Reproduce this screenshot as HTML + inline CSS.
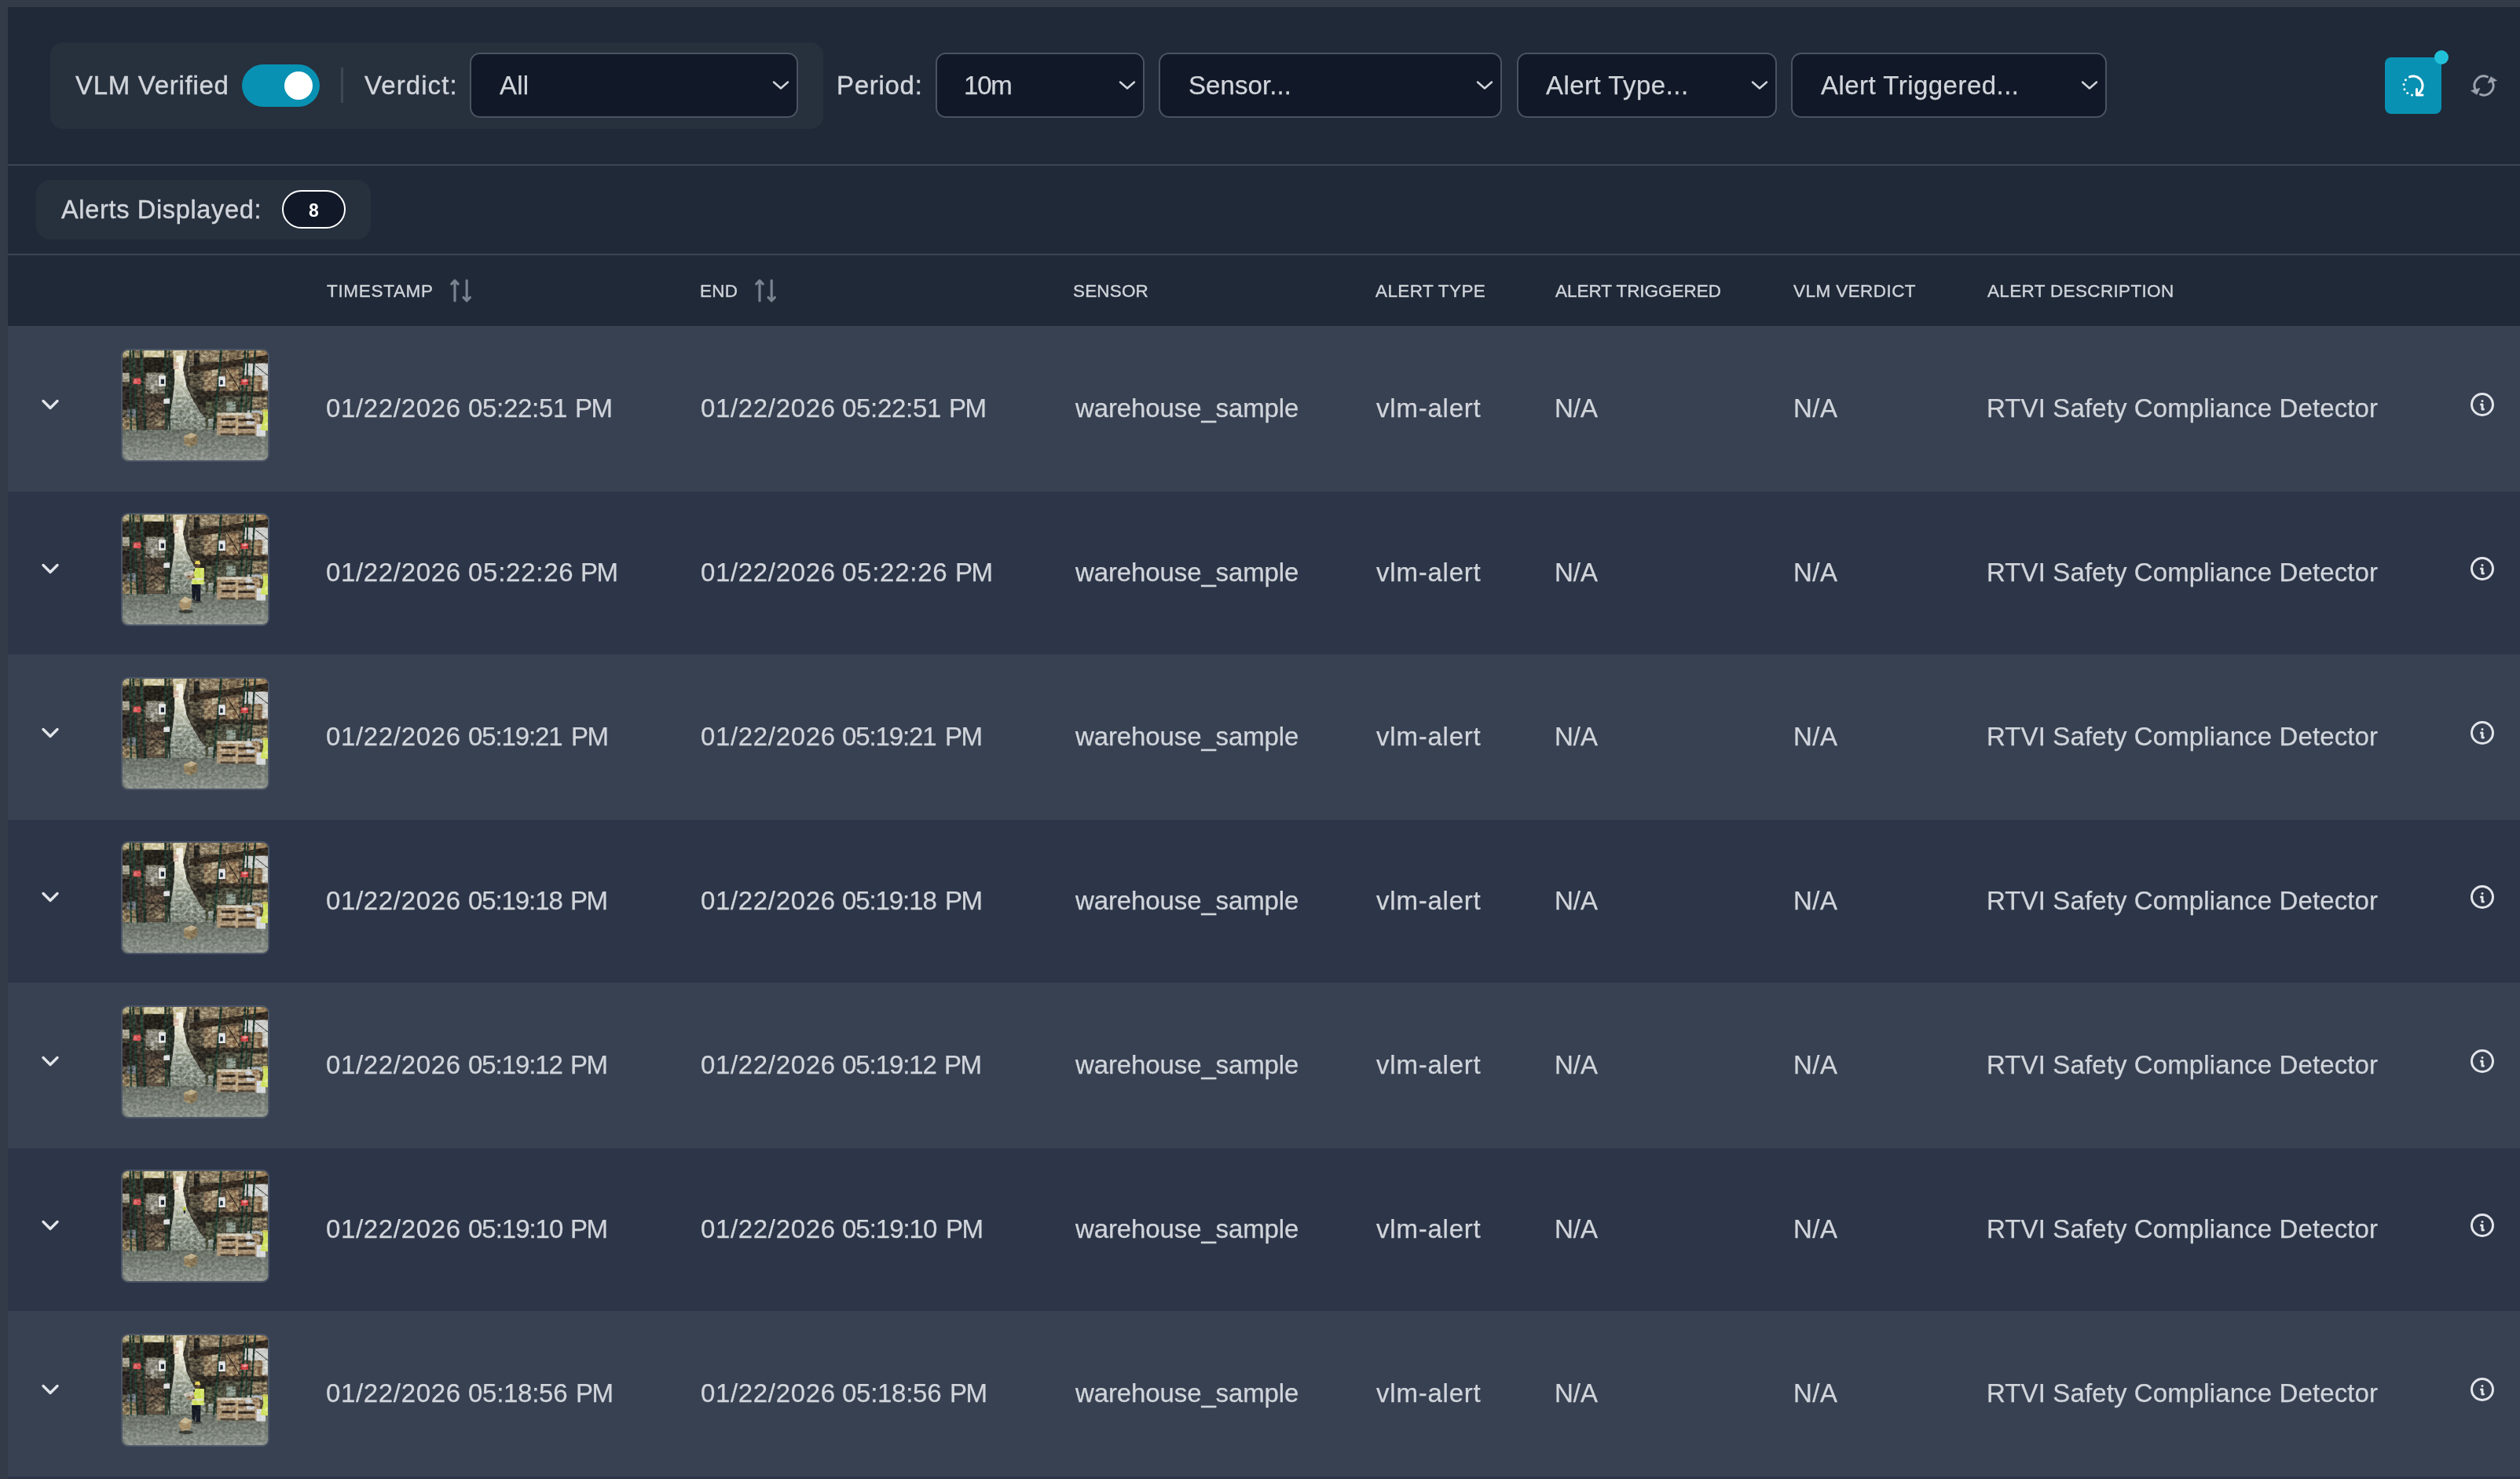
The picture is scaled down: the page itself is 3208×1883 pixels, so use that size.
<!DOCTYPE html>
<html lang="en"><head><meta charset="utf-8"><title>Alerts</title>
<style>
html,body{margin:0;padding:0;background:#333b48;overflow:hidden}
body{width:3208px;height:1883px;position:relative;font-family:"Liberation Sans",sans-serif}
.panel{position:absolute;left:10px;top:9px;width:3198px;height:1874px;background:#202938}
.t{position:absolute;white-space:pre;line-height:1;will-change:transform;font-family:"Liberation Sans",sans-serif}
.grp{position:absolute;background:#27303d;border-radius:16px}
.sel{position:absolute;top:67px;height:83px;box-sizing:border-box;background:#111827;border:2px solid #4a5361;border-radius:13px}
.chev{position:absolute}
.hr{position:absolute;left:10px;width:3198px;height:2px;background:#3a4454}
.row{position:absolute;left:10px;width:3198px;height:209px}
.thumb{position:absolute;left:154px;width:189px;height:144px;box-sizing:border-box;border:2px solid #4b5566;border-radius:9px;overflow:hidden;background:#4b4535}
.thumb svg{display:block}
</style></head><body>
<div class="panel"></div>

<div class="grp" style="left:64px;top:54px;width:984px;height:110px"></div>
<div style="position:absolute;left:308px;top:82px;width:99px;height:54px;border-radius:27px;background:#0891b2"></div>
<div style="position:absolute;left:361.5px;top:90.5px;width:36px;height:36px;border-radius:50%;background:#fff"></div>
<div style="position:absolute;left:433.5px;top:86px;width:3px;height:45px;background:#3e4755"></div>
<div class="sel" style="left:598px;width:418px"></div><svg class="chev" style="left:981px;top:101px" width="26" height="16" viewBox="0 0 26 16"><path d="M4 3.5 L13 11.5 L22 3.5" fill="none" stroke="#d1d5db" stroke-width="2.5" stroke-linecap="round" stroke-linejoin="round"/></svg>
<div class="sel" style="left:1191px;width:265.5px"></div><svg class="chev" style="left:1421.5px;top:101px" width="26" height="16" viewBox="0 0 26 16"><path d="M4 3.5 L13 11.5 L22 3.5" fill="none" stroke="#d1d5db" stroke-width="2.5" stroke-linecap="round" stroke-linejoin="round"/></svg>
<div class="sel" style="left:1475px;width:437px"></div><svg class="chev" style="left:1877px;top:101px" width="26" height="16" viewBox="0 0 26 16"><path d="M4 3.5 L13 11.5 L22 3.5" fill="none" stroke="#d1d5db" stroke-width="2.5" stroke-linecap="round" stroke-linejoin="round"/></svg>
<div class="sel" style="left:1930.5px;width:331.5px"></div><svg class="chev" style="left:2227px;top:101px" width="26" height="16" viewBox="0 0 26 16"><path d="M4 3.5 L13 11.5 L22 3.5" fill="none" stroke="#d1d5db" stroke-width="2.5" stroke-linecap="round" stroke-linejoin="round"/></svg>
<div class="sel" style="left:2280px;width:402px"></div><svg class="chev" style="left:2647px;top:101px" width="26" height="16" viewBox="0 0 26 16"><path d="M4 3.5 L13 11.5 L22 3.5" fill="none" stroke="#d1d5db" stroke-width="2.5" stroke-linecap="round" stroke-linejoin="round"/></svg>
<div style="position:absolute;left:3036px;top:73px;width:72px;height:72px;border-radius:8px;background:#0891b2"></div>
<svg style="position:absolute;left:3054px;top:91px" width="36" height="36" viewBox="0 0 24 24" fill="none" stroke="#fff" stroke-width="2" stroke-linecap="round" stroke-linejoin="round"><path d="M9 4.55a8 8 0 0 1 6 14.9m0 -4.45v5h5"/><path d="M5.63 7.16l0 .01"/><path d="M4.06 11l0 .01"/><path d="M4.63 15.1l0 .01"/><path d="M7.16 18.37l0 .01"/><path d="M11 19.94l0 .01"/></svg>
<div style="position:absolute;left:3099px;top:64px;width:18px;height:18px;border-radius:50%;background:#22c1da"></div>
<svg style="position:absolute;left:3142.1px;top:88.85px" width="40" height="40" viewBox="-20 -20 40 40" fill="none" stroke="#9ca3af" stroke-width="2.9" stroke-linecap="round"><path d="M4.5 -11.13 A12 12 0 0 0 -10.9 5.01"/><path d="M-4.5 11.13 A12 12 0 0 0 10.9 -5.01"/><path d="M-16.06 6.42 L-5.24 3.38 L-8.79 10.99 Z M16.06 -6.42 L5.24 -3.38 L8.79 -10.99 Z" fill="#9ca3af" stroke="#9ca3af" stroke-width="0.8" stroke-linejoin="round"/></svg>
<div class="hr" style="top:209px"></div>
<div class="hr" style="top:323px"></div>
<div class="grp" style="left:46px;top:229px;width:426px;height:76px;border-radius:18px"></div>
<div style="position:absolute;left:359px;top:242px;width:81px;height:49px;box-sizing:border-box;border:2px solid #fff;border-radius:25px;background:#111827"></div>
<svg style="position:absolute;left:571.4px;top:350px" width="40" height="40" viewBox="0 0 40 40" fill="none" stroke="#79828f" stroke-width="3.2" stroke-linecap="round" stroke-linejoin="round"><path d="M8 33 V7.2 M3.8 11.6 L8 7.2 L12.2 11.6"/><path d="M23.2 7.2 V33 M19 28.6 L23.2 33 L27.4 28.6"/></svg>
<svg style="position:absolute;left:958.8px;top:350px" width="40" height="40" viewBox="0 0 40 40" fill="none" stroke="#79828f" stroke-width="3.2" stroke-linecap="round" stroke-linejoin="round"><path d="M8 33 V7.2 M3.8 11.6 L8 7.2 L12.2 11.6"/><path d="M23.2 7.2 V33 M19 28.6 L23.2 33 L27.4 28.6"/></svg>
<div class="row" style="top:415px;height:211px;background:#374152"></div>
<svg style="position:absolute;left:48px;top:502px" width="32" height="26" viewBox="0 0 32 26"><path d="M7 8.5 L16 17.5 L25 8.5" fill="none" stroke="#e2e5ea" stroke-width="3.4" stroke-linecap="round" stroke-linejoin="round"/></svg>
<div class="thumb" style="top:444px"><svg width="185" height="140" viewBox="0 0 185.3 140.2" preserveAspectRatio="none"><defs><linearGradient id="flr0" x1="0" y1="0" x2="0" y2="1"><stop offset="0" stop-color="#6b7468"/><stop offset="1" stop-color="#929990"/></linearGradient><linearGradient id="air0" x1="0" y1="0" x2="0" y2="1"><stop offset="0" stop-color="#f1ecd6"/><stop offset="0.25" stop-color="#c9cbb6"/><stop offset="0.6" stop-color="#9aa395"/><stop offset="1" stop-color="#848d80"/></linearGradient><filter id="blr0" x="-5%" y="-5%" width="110%" height="110%"><feGaussianBlur stdDeviation="0.6"/><feColorMatrix type="saturate" values="0.78"/></filter><filter id="nzr0" x="0" y="0" width="100%" height="100%" color-interpolation-filters="sRGB"><feTurbulence type="fractalNoise" baseFrequency="0.22 0.3" numOctaves="3" seed="7"/><feColorMatrix type="saturate" values="0"/><feComponentTransfer><feFuncR type="linear" slope="2.4" intercept="-0.78"/><feFuncG type="linear" slope="2.4" intercept="-0.78"/><feFuncB type="linear" slope="2.4" intercept="-0.78"/><feFuncA type="linear" slope="0" intercept="1"/></feComponentTransfer></filter></defs><g filter="url(#blr0)"><rect x="-3" y="-3" width="191" height="146" fill="#4b4535"/><rect x="-3" y="100.57" width="191" height="43.23" fill="url(#flr0)"/><rect x="63.45" y="-2.3" width="21.84" height="27.59" fill="#cfc49a"/><rect x="68.62" y="6.9" width="8.62" height="17.24" fill="#f3efe2"/><rect x="64.6" y="14.94" width="6.9" height="9.2" fill="#d9b9a0"/><polygon points="65.17,24.14 77.24,24.14 81.84,45.98 91.03,65.52 100.23,80.46 120.92,101.15 57.13,101.15 60.57,80.46 64.02,59.77 66.32,37.93" fill="url(#air0)"/><rect x="-4.37" y="-2.3" width="68.97" height="12.07" fill="#8d7f52"/><rect x="27.24" y="0.57" width="25.86" height="8.05" fill="#d6cc9c"/><rect x="0.0" y="0.57" width="8.85" height="7.47" fill="#b9ad80"/><rect x="27.82" y="9.2" width="36.78" height="18.97" fill="#2a261f"/><rect x="-4.37" y="9.77" width="32.18" height="24.71" fill="#3a352a"/><rect x="0.0" y="28.74" width="8.85" height="11.49" fill="#a9a48e"/><rect x="29.54" y="28.74" width="26.44" height="26.44" fill="#86826f"/><rect x="32.41" y="32.18" width="11.49" height="18.39" fill="#9a968a"/><rect x="-4.37" y="45.98" width="22.99" height="29.89" fill="#332c25"/><rect x="18.62" y="56.32" width="39.08" height="44.83" fill="#4a3e30"/><rect x="31.26" y="66.67" width="21.84" height="8.05" fill="#6b5640"/><rect x="30.69" y="78.16" width="25.29" height="21.84" fill="#6c5b45"/><rect x="-4.37" y="75.86" width="22.99" height="25.29" fill="#5d5443"/><rect x="5.98" y="74.71" width="11.49" height="10.34" fill="#6f7480"/><rect x="0.0" y="85.06" width="18.62" height="11.49" fill="#86734f"/><rect x="0.0" y="95.98" width="19.77" height="5.17" fill="#9c8a60"/><rect x="41.61" y="87.36" width="11.49" height="9.2" fill="#8b7a5a"/><polygon points="57.7,24.14 66.32,24.14 66.32,37.93 64.02,59.77 60.57,80.46 57.7,100.0" fill="#2c2f27"/><line x1="9.66" y1="-2.3" x2="10.8" y2="101.72" stroke="#1f4133" stroke-width="2.3"/><line x1="13.45" y1="-2.3" x2="19.2" y2="101.72" stroke="#1f4133" stroke-width="2.53"/><line x1="23.22" y1="-2.3" x2="28.74" y2="101.72" stroke="#1f4133" stroke-width="2.99"/><line x1="54.48" y1="-2.3" x2="55.63" y2="101.72" stroke="#1f4133" stroke-width="2.3"/><line x1="59.43" y1="-2.3" x2="60.23" y2="101.72" stroke="#1f4133" stroke-width="1.61"/><line x1="30.11" y1="50.57" x2="57.7" y2="73.56" stroke="#3a3328" stroke-width="1.38"/><line x1="30.11" y1="89.66" x2="55.4" y2="71.26" stroke="#3a3328" stroke-width="1.15"/><rect x="13.79" y="35.63" width="9.66" height="7.47" fill="#e63a3e" rx="1"/><rect x="15.17" y="36.78" width="6.9" height="2.87" fill="#ef8a86"/><rect x="46.21" y="32.18" width="8.74" height="13.56" fill="#e9e9e6"/><rect x="48.85" y="36.78" width="4.25" height="5.98" fill="#27364f"/><rect x="52.41" y="61.49" width="7.82" height="6.55" fill="#dfe0e2"/><polygon points="77.24,24.14 82.99,-2.3 123.79,-2.3 123.79,101.15 100.23,80.46 91.03,65.52 81.84,45.98" fill="#4d4738"/><rect x="99.08" y="14.94" width="4.6" height="35.63" fill="#6f6650"/><rect x="84.14" y="14.94" width="6.32" height="17.24" fill="#7d735c"/><rect x="107.13" y="57.47" width="6.9" height="9.2" fill="#7a8078"/><rect x="85.29" y="-2.3" width="13.79" height="16.09" fill="#8c7a58"/><rect x="99.08" y="-2.3" width="24.71" height="17.24" fill="#9b8a68"/><rect x="91.03" y="3.45" width="6.9" height="31.03" fill="#2d2a25"/><rect x="103.68" y="19.54" width="18.39" height="32.18" fill="#97805a"/><rect x="114.02" y="19.54" width="7.47" height="12.64" fill="#b9aa88"/><rect x="85.29" y="29.89" width="13.79" height="16.09" fill="#5d543f"/><polygon points="94.48,50.57 123.79,55.17 123.79,66.67 105.98,73.56 94.48,66.67" fill="#2e2922"/><rect x="105.98" y="64.37" width="17.82" height="34.48" fill="#55583f"/><rect x="109.43" y="87.36" width="6.9" height="9.2" fill="#9aa39a"/><rect x="123.79" y="-2.3" width="62.64" height="103.45" fill="#6a5940"/><rect x="123.79" y="-2.3" width="62.64" height="17.24" fill="#8a744f"/><rect x="154.25" y="0.0" width="32.18" height="9.2" fill="#a88a58"/><polygon points="85.29,20.69 186.44,5.75 186.44,14.94 85.29,28.74" fill="#3b2f24"/><rect x="132.41" y="24.14" width="15.52" height="27.01" fill="#a3875c"/><rect x="133.56" y="34.48" width="13.79" height="5.75" fill="#8a6c48"/><rect x="163.45" y="32.18" width="16.09" height="25.29" fill="#9c835c"/><rect x="155.4" y="16.67" width="31.03" height="15.52" fill="#cfd0cd"/><rect x="178.39" y="32.18" width="8.05" height="18.39" fill="#d0cfc6"/><rect x="99.08" y="52.3" width="87.36" height="5.75" fill="#3b3026"/><rect x="123.79" y="58.05" width="62.64" height="22.41" fill="#53543f"/><rect x="132.41" y="65.52" width="11.49" height="12.64" fill="#8a9a8c"/><rect x="163.45" y="59.77" width="20.69" height="13.79" fill="#8c7a58"/><rect x="158.85" y="76.44" width="19.54" height="5.75" fill="#aeb8bc"/><line x1="126.09" y1="-2.3" x2="116.32" y2="101.15" stroke="#1f4133" stroke-width="2.76"/><line x1="156.55" y1="-2.3" x2="149.08" y2="101.15" stroke="#1f4133" stroke-width="2.53"/><line x1="160.0" y1="-2.3" x2="156.55" y2="101.15" stroke="#1f4133" stroke-width="1.84"/><line x1="169.2" y1="-2.3" x2="161.72" y2="101.15" stroke="#1f4133" stroke-width="2.3"/><line x1="127.82" y1="14.94" x2="149.66" y2="50.57" stroke="#3a3328" stroke-width="1.15"/><line x1="168.05" y1="18.39" x2="185.29" y2="32.18" stroke="#3a4038" stroke-width="0.92"/><rect x="150.8" y="36.78" width="9.43" height="7.13" fill="#e63a3e"/><rect x="152.18" y="37.7" width="6.67" height="2.53" fill="#ee8e8a"/><rect x="122.53" y="33.33" width="8.51" height="12.87" fill="#e6e8ea"/><rect x="124.6" y="37.93" width="3.22" height="5.75" fill="#27364f"/><rect x="120.34" y="79.89" width="54.6" height="28.39" fill="#b0966f"/><rect x="121.49" y="79.54" width="43.1" height="3.45" fill="#d3cab4"/><rect x="156.55" y="82.18" width="9.2" height="4.6" fill="#c3c8cc"/><rect x="158.28" y="89.08" width="9.77" height="5.75" fill="#cfd3d6"/><rect x="126.67" y="86.44" width="17.47" height="2.87" fill="#3e3226"/><rect x="147.36" y="87.59" width="21.26" height="2.76" fill="#3e3226"/><rect x="126.67" y="96.32" width="17.47" height="2.99" fill="#3e3226"/><rect x="147.36" y="97.01" width="21.26" height="2.99" fill="#3e3226"/><rect x="124.94" y="105.75" width="44.25" height="2.76" fill="#5a4a36"/><rect x="143.91" y="82.99" width="3.45" height="25.29" fill="#c4aa80"/><rect x="170.92" y="94.25" width="11.49" height="15.52" fill="#d9dbde"/><polygon points="178.97,75.29 186.44,75.29 186.44,102.87 175.86,101.15 179.54,87.36" fill="#d2e600"/><rect x="177.24" y="75.86" width="9.2" height="2.3" fill="#d9c74a"/><polygon points="78.16,109.77 87.59,105.17 95.4,108.28 95.17,118.39 86.44,123.56 78.62,119.54" fill="#9c8555"/><polygon points="78.16,109.77 87.59,105.17 95.4,108.28 86.44,112.64" fill="#c2ae80"/><polygon points="86.44,112.64 95.4,108.28 95.17,118.39 86.44,123.56" fill="#8a744a"/></g><linearGradient id="mgr0" x1="0" y1="0" x2="0" y2="1"><stop offset="0.66" stop-color="#fff"/><stop offset="0.76" stop-color="#666"/></linearGradient><mask id="mkr0"><rect x="0" y="0" width="185.3" height="140.2" fill="url(#mgr0)"/></mask><g mask="url(#mkr0)" style="mix-blend-mode:overlay"><rect x="0" y="0" width="185.3" height="140.2" filter="url(#nzr0)" opacity="0.45"/></g></svg></div>
<svg style="position:absolute;left:3142px;top:497px" width="36" height="36" viewBox="0 0 24 24" fill="none" stroke="#e2e5ea" stroke-width="2" stroke-linecap="round" stroke-linejoin="round"><path d="M3 12a9 9 0 1 0 18 0a9 9 0 0 0 -18 0"/><path d="M12 9h.01"/><path d="M11 12h1v4h1"/></svg>
<div class="row" style="top:626px;height:207px;background:#2d3648"></div>
<svg style="position:absolute;left:48px;top:711px" width="32" height="26" viewBox="0 0 32 26"><path d="M7 8.5 L16 17.5 L25 8.5" fill="none" stroke="#e2e5ea" stroke-width="3.4" stroke-linecap="round" stroke-linejoin="round"/></svg>
<div class="thumb" style="top:653px"><svg width="185" height="140" viewBox="0 0 185.3 140.2" preserveAspectRatio="none"><defs><linearGradient id="flr1" x1="0" y1="0" x2="0" y2="1"><stop offset="0" stop-color="#6b7468"/><stop offset="1" stop-color="#929990"/></linearGradient><linearGradient id="air1" x1="0" y1="0" x2="0" y2="1"><stop offset="0" stop-color="#f1ecd6"/><stop offset="0.25" stop-color="#c9cbb6"/><stop offset="0.6" stop-color="#9aa395"/><stop offset="1" stop-color="#848d80"/></linearGradient><filter id="blr1" x="-5%" y="-5%" width="110%" height="110%"><feGaussianBlur stdDeviation="0.6"/><feColorMatrix type="saturate" values="0.78"/></filter><filter id="nzr1" x="0" y="0" width="100%" height="100%" color-interpolation-filters="sRGB"><feTurbulence type="fractalNoise" baseFrequency="0.22 0.3" numOctaves="3" seed="7"/><feColorMatrix type="saturate" values="0"/><feComponentTransfer><feFuncR type="linear" slope="2.4" intercept="-0.78"/><feFuncG type="linear" slope="2.4" intercept="-0.78"/><feFuncB type="linear" slope="2.4" intercept="-0.78"/><feFuncA type="linear" slope="0" intercept="1"/></feComponentTransfer></filter></defs><g filter="url(#blr1)"><rect x="-3" y="-3" width="191" height="146" fill="#4b4535"/><rect x="-3" y="100.57" width="191" height="43.23" fill="url(#flr1)"/><rect x="63.45" y="-2.3" width="21.84" height="27.59" fill="#cfc49a"/><rect x="68.62" y="6.9" width="8.62" height="17.24" fill="#f3efe2"/><rect x="64.6" y="14.94" width="6.9" height="9.2" fill="#d9b9a0"/><polygon points="65.17,24.14 77.24,24.14 81.84,45.98 91.03,65.52 100.23,80.46 120.92,101.15 57.13,101.15 60.57,80.46 64.02,59.77 66.32,37.93" fill="url(#air1)"/><rect x="-4.37" y="-2.3" width="68.97" height="12.07" fill="#8d7f52"/><rect x="27.24" y="0.57" width="25.86" height="8.05" fill="#d6cc9c"/><rect x="0.0" y="0.57" width="8.85" height="7.47" fill="#b9ad80"/><rect x="27.82" y="9.2" width="36.78" height="18.97" fill="#2a261f"/><rect x="-4.37" y="9.77" width="32.18" height="24.71" fill="#3a352a"/><rect x="0.0" y="28.74" width="8.85" height="11.49" fill="#a9a48e"/><rect x="29.54" y="28.74" width="26.44" height="26.44" fill="#86826f"/><rect x="32.41" y="32.18" width="11.49" height="18.39" fill="#9a968a"/><rect x="-4.37" y="45.98" width="22.99" height="29.89" fill="#332c25"/><rect x="18.62" y="56.32" width="39.08" height="44.83" fill="#4a3e30"/><rect x="31.26" y="66.67" width="21.84" height="8.05" fill="#6b5640"/><rect x="30.69" y="78.16" width="25.29" height="21.84" fill="#6c5b45"/><rect x="-4.37" y="75.86" width="22.99" height="25.29" fill="#5d5443"/><rect x="5.98" y="74.71" width="11.49" height="10.34" fill="#6f7480"/><rect x="0.0" y="85.06" width="18.62" height="11.49" fill="#86734f"/><rect x="0.0" y="95.98" width="19.77" height="5.17" fill="#9c8a60"/><rect x="41.61" y="87.36" width="11.49" height="9.2" fill="#8b7a5a"/><polygon points="57.7,24.14 66.32,24.14 66.32,37.93 64.02,59.77 60.57,80.46 57.7,100.0" fill="#2c2f27"/><line x1="9.66" y1="-2.3" x2="10.8" y2="101.72" stroke="#1f4133" stroke-width="2.3"/><line x1="13.45" y1="-2.3" x2="19.2" y2="101.72" stroke="#1f4133" stroke-width="2.53"/><line x1="23.22" y1="-2.3" x2="28.74" y2="101.72" stroke="#1f4133" stroke-width="2.99"/><line x1="54.48" y1="-2.3" x2="55.63" y2="101.72" stroke="#1f4133" stroke-width="2.3"/><line x1="59.43" y1="-2.3" x2="60.23" y2="101.72" stroke="#1f4133" stroke-width="1.61"/><line x1="30.11" y1="50.57" x2="57.7" y2="73.56" stroke="#3a3328" stroke-width="1.38"/><line x1="30.11" y1="89.66" x2="55.4" y2="71.26" stroke="#3a3328" stroke-width="1.15"/><rect x="13.79" y="35.63" width="9.66" height="7.47" fill="#e63a3e" rx="1"/><rect x="15.17" y="36.78" width="6.9" height="2.87" fill="#ef8a86"/><rect x="46.21" y="32.18" width="8.74" height="13.56" fill="#e9e9e6"/><rect x="48.85" y="36.78" width="4.25" height="5.98" fill="#27364f"/><rect x="52.41" y="61.49" width="7.82" height="6.55" fill="#dfe0e2"/><polygon points="77.24,24.14 82.99,-2.3 123.79,-2.3 123.79,101.15 100.23,80.46 91.03,65.52 81.84,45.98" fill="#4d4738"/><rect x="99.08" y="14.94" width="4.6" height="35.63" fill="#6f6650"/><rect x="84.14" y="14.94" width="6.32" height="17.24" fill="#7d735c"/><rect x="107.13" y="57.47" width="6.9" height="9.2" fill="#7a8078"/><rect x="85.29" y="-2.3" width="13.79" height="16.09" fill="#8c7a58"/><rect x="99.08" y="-2.3" width="24.71" height="17.24" fill="#9b8a68"/><rect x="91.03" y="3.45" width="6.9" height="31.03" fill="#2d2a25"/><rect x="103.68" y="19.54" width="18.39" height="32.18" fill="#97805a"/><rect x="114.02" y="19.54" width="7.47" height="12.64" fill="#b9aa88"/><rect x="85.29" y="29.89" width="13.79" height="16.09" fill="#5d543f"/><polygon points="94.48,50.57 123.79,55.17 123.79,66.67 105.98,73.56 94.48,66.67" fill="#2e2922"/><rect x="105.98" y="64.37" width="17.82" height="34.48" fill="#55583f"/><rect x="109.43" y="87.36" width="6.9" height="9.2" fill="#9aa39a"/><rect x="123.79" y="-2.3" width="62.64" height="103.45" fill="#6a5940"/><rect x="123.79" y="-2.3" width="62.64" height="17.24" fill="#8a744f"/><rect x="154.25" y="0.0" width="32.18" height="9.2" fill="#a88a58"/><polygon points="85.29,20.69 186.44,5.75 186.44,14.94 85.29,28.74" fill="#3b2f24"/><rect x="132.41" y="24.14" width="15.52" height="27.01" fill="#a3875c"/><rect x="133.56" y="34.48" width="13.79" height="5.75" fill="#8a6c48"/><rect x="163.45" y="32.18" width="16.09" height="25.29" fill="#9c835c"/><rect x="155.4" y="16.67" width="31.03" height="15.52" fill="#cfd0cd"/><rect x="178.39" y="32.18" width="8.05" height="18.39" fill="#d0cfc6"/><rect x="99.08" y="52.3" width="87.36" height="5.75" fill="#3b3026"/><rect x="123.79" y="58.05" width="62.64" height="22.41" fill="#53543f"/><rect x="132.41" y="65.52" width="11.49" height="12.64" fill="#8a9a8c"/><rect x="163.45" y="59.77" width="20.69" height="13.79" fill="#8c7a58"/><rect x="158.85" y="76.44" width="19.54" height="5.75" fill="#aeb8bc"/><line x1="126.09" y1="-2.3" x2="116.32" y2="101.15" stroke="#1f4133" stroke-width="2.76"/><line x1="156.55" y1="-2.3" x2="149.08" y2="101.15" stroke="#1f4133" stroke-width="2.53"/><line x1="160.0" y1="-2.3" x2="156.55" y2="101.15" stroke="#1f4133" stroke-width="1.84"/><line x1="169.2" y1="-2.3" x2="161.72" y2="101.15" stroke="#1f4133" stroke-width="2.3"/><line x1="127.82" y1="14.94" x2="149.66" y2="50.57" stroke="#3a3328" stroke-width="1.15"/><line x1="168.05" y1="18.39" x2="185.29" y2="32.18" stroke="#3a4038" stroke-width="0.92"/><rect x="150.8" y="36.78" width="9.43" height="7.13" fill="#e63a3e"/><rect x="152.18" y="37.7" width="6.67" height="2.53" fill="#ee8e8a"/><rect x="122.53" y="33.33" width="8.51" height="12.87" fill="#e6e8ea"/><rect x="124.6" y="37.93" width="3.22" height="5.75" fill="#27364f"/><rect x="120.34" y="79.89" width="54.6" height="28.39" fill="#b0966f"/><rect x="121.49" y="79.54" width="43.1" height="3.45" fill="#d3cab4"/><rect x="156.55" y="82.18" width="9.2" height="4.6" fill="#c3c8cc"/><rect x="158.28" y="89.08" width="9.77" height="5.75" fill="#cfd3d6"/><rect x="126.67" y="86.44" width="17.47" height="2.87" fill="#3e3226"/><rect x="147.36" y="87.59" width="21.26" height="2.76" fill="#3e3226"/><rect x="126.67" y="96.32" width="17.47" height="2.99" fill="#3e3226"/><rect x="147.36" y="97.01" width="21.26" height="2.99" fill="#3e3226"/><rect x="124.94" y="105.75" width="44.25" height="2.76" fill="#5a4a36"/><rect x="143.91" y="82.99" width="3.45" height="25.29" fill="#c4aa80"/><rect x="170.92" y="94.25" width="11.49" height="15.52" fill="#d9dbde"/><polygon points="178.97,75.29 186.44,75.29 186.44,102.87 175.86,101.15 179.54,87.36" fill="#d2e600"/><rect x="177.24" y="75.86" width="9.2" height="2.3" fill="#d9c74a"/><g transform="translate(0,-1.1)"><ellipse cx="80.69" cy="124.71" rx="9.2" ry="2.53" fill="#3d4038"/><ellipse cx="94.48" cy="112.07" rx="6.9" ry="2.3" fill="#4a4d44"/><polygon points="88.16,90.23 99.66,90.23 99.08,111.49 93.91,112.07 93.33,98.85 92.18,110.92 88.74,108.05" fill="#161b2b"/><rect x="90.46" y="70.69" width="4.6" height="7.47" fill="#1c1e24"/><polygon points="93.33,68.39 104.25,69.54 103.68,90.23 88.16,89.66 89.31,78.16" fill="#d4e800"/><rect x="89.31" y="82.18" width="14.37" height="2.3" fill="#dfe0c8"/><polygon points="81.84,80.46 91.03,77.01 92.18,81.61 82.99,83.91" fill="#a07850"/><polygon points="77.82,75.29 90.46,72.18 91.61,77.01 79.54,79.89" fill="#cfc8ba"/><rect x="92.76" y="63.79" width="5.75" height="5.17" fill="#5a4030"/><polygon points="91.61,64.37 93.33,60.34 97.93,59.77 99.66,64.37" fill="#f0d800"/><polygon points="72.64,111.49 79.54,105.75 88.16,109.77 86.44,120.69 76.09,123.56 72.07,118.39" fill="#b09665"/><polygon points="72.64,111.49 79.54,105.75 88.16,109.77 81.84,113.79" fill="#cdb98a"/></g></g><linearGradient id="mgr1" x1="0" y1="0" x2="0" y2="1"><stop offset="0.66" stop-color="#fff"/><stop offset="0.76" stop-color="#666"/></linearGradient><mask id="mkr1"><rect x="0" y="0" width="185.3" height="140.2" fill="url(#mgr1)"/></mask><g mask="url(#mkr1)" style="mix-blend-mode:overlay"><rect x="0" y="0" width="185.3" height="140.2" filter="url(#nzr1)" opacity="0.45"/></g></svg></div>
<svg style="position:absolute;left:3142px;top:706px" width="36" height="36" viewBox="0 0 24 24" fill="none" stroke="#e2e5ea" stroke-width="2" stroke-linecap="round" stroke-linejoin="round"><path d="M3 12a9 9 0 1 0 18 0a9 9 0 0 0 -18 0"/><path d="M12 9h.01"/><path d="M11 12h1v4h1"/></svg>
<div class="row" style="top:833px;height:211px;background:#374152"></div>
<svg style="position:absolute;left:48px;top:920px" width="32" height="26" viewBox="0 0 32 26"><path d="M7 8.5 L16 17.5 L25 8.5" fill="none" stroke="#e2e5ea" stroke-width="3.4" stroke-linecap="round" stroke-linejoin="round"/></svg>
<div class="thumb" style="top:862px"><svg width="185" height="140" viewBox="0 0 185.3 140.2" preserveAspectRatio="none"><defs><linearGradient id="flr2" x1="0" y1="0" x2="0" y2="1"><stop offset="0" stop-color="#6b7468"/><stop offset="1" stop-color="#929990"/></linearGradient><linearGradient id="air2" x1="0" y1="0" x2="0" y2="1"><stop offset="0" stop-color="#f1ecd6"/><stop offset="0.25" stop-color="#c9cbb6"/><stop offset="0.6" stop-color="#9aa395"/><stop offset="1" stop-color="#848d80"/></linearGradient><filter id="blr2" x="-5%" y="-5%" width="110%" height="110%"><feGaussianBlur stdDeviation="0.6"/><feColorMatrix type="saturate" values="0.78"/></filter><filter id="nzr2" x="0" y="0" width="100%" height="100%" color-interpolation-filters="sRGB"><feTurbulence type="fractalNoise" baseFrequency="0.22 0.3" numOctaves="3" seed="7"/><feColorMatrix type="saturate" values="0"/><feComponentTransfer><feFuncR type="linear" slope="2.4" intercept="-0.78"/><feFuncG type="linear" slope="2.4" intercept="-0.78"/><feFuncB type="linear" slope="2.4" intercept="-0.78"/><feFuncA type="linear" slope="0" intercept="1"/></feComponentTransfer></filter></defs><g filter="url(#blr2)"><rect x="-3" y="-3" width="191" height="146" fill="#4b4535"/><rect x="-3" y="100.57" width="191" height="43.23" fill="url(#flr2)"/><rect x="63.45" y="-2.3" width="21.84" height="27.59" fill="#cfc49a"/><rect x="68.62" y="6.9" width="8.62" height="17.24" fill="#f3efe2"/><rect x="64.6" y="14.94" width="6.9" height="9.2" fill="#d9b9a0"/><polygon points="65.17,24.14 77.24,24.14 81.84,45.98 91.03,65.52 100.23,80.46 120.92,101.15 57.13,101.15 60.57,80.46 64.02,59.77 66.32,37.93" fill="url(#air2)"/><rect x="-4.37" y="-2.3" width="68.97" height="12.07" fill="#8d7f52"/><rect x="27.24" y="0.57" width="25.86" height="8.05" fill="#d6cc9c"/><rect x="0.0" y="0.57" width="8.85" height="7.47" fill="#b9ad80"/><rect x="27.82" y="9.2" width="36.78" height="18.97" fill="#2a261f"/><rect x="-4.37" y="9.77" width="32.18" height="24.71" fill="#3a352a"/><rect x="0.0" y="28.74" width="8.85" height="11.49" fill="#a9a48e"/><rect x="29.54" y="28.74" width="26.44" height="26.44" fill="#86826f"/><rect x="32.41" y="32.18" width="11.49" height="18.39" fill="#9a968a"/><rect x="-4.37" y="45.98" width="22.99" height="29.89" fill="#332c25"/><rect x="18.62" y="56.32" width="39.08" height="44.83" fill="#4a3e30"/><rect x="31.26" y="66.67" width="21.84" height="8.05" fill="#6b5640"/><rect x="30.69" y="78.16" width="25.29" height="21.84" fill="#6c5b45"/><rect x="-4.37" y="75.86" width="22.99" height="25.29" fill="#5d5443"/><rect x="5.98" y="74.71" width="11.49" height="10.34" fill="#6f7480"/><rect x="0.0" y="85.06" width="18.62" height="11.49" fill="#86734f"/><rect x="0.0" y="95.98" width="19.77" height="5.17" fill="#9c8a60"/><rect x="41.61" y="87.36" width="11.49" height="9.2" fill="#8b7a5a"/><polygon points="57.7,24.14 66.32,24.14 66.32,37.93 64.02,59.77 60.57,80.46 57.7,100.0" fill="#2c2f27"/><line x1="9.66" y1="-2.3" x2="10.8" y2="101.72" stroke="#1f4133" stroke-width="2.3"/><line x1="13.45" y1="-2.3" x2="19.2" y2="101.72" stroke="#1f4133" stroke-width="2.53"/><line x1="23.22" y1="-2.3" x2="28.74" y2="101.72" stroke="#1f4133" stroke-width="2.99"/><line x1="54.48" y1="-2.3" x2="55.63" y2="101.72" stroke="#1f4133" stroke-width="2.3"/><line x1="59.43" y1="-2.3" x2="60.23" y2="101.72" stroke="#1f4133" stroke-width="1.61"/><line x1="30.11" y1="50.57" x2="57.7" y2="73.56" stroke="#3a3328" stroke-width="1.38"/><line x1="30.11" y1="89.66" x2="55.4" y2="71.26" stroke="#3a3328" stroke-width="1.15"/><rect x="13.79" y="35.63" width="9.66" height="7.47" fill="#e63a3e" rx="1"/><rect x="15.17" y="36.78" width="6.9" height="2.87" fill="#ef8a86"/><rect x="46.21" y="32.18" width="8.74" height="13.56" fill="#e9e9e6"/><rect x="48.85" y="36.78" width="4.25" height="5.98" fill="#27364f"/><rect x="52.41" y="61.49" width="7.82" height="6.55" fill="#dfe0e2"/><polygon points="77.24,24.14 82.99,-2.3 123.79,-2.3 123.79,101.15 100.23,80.46 91.03,65.52 81.84,45.98" fill="#4d4738"/><rect x="99.08" y="14.94" width="4.6" height="35.63" fill="#6f6650"/><rect x="84.14" y="14.94" width="6.32" height="17.24" fill="#7d735c"/><rect x="107.13" y="57.47" width="6.9" height="9.2" fill="#7a8078"/><rect x="85.29" y="-2.3" width="13.79" height="16.09" fill="#8c7a58"/><rect x="99.08" y="-2.3" width="24.71" height="17.24" fill="#9b8a68"/><rect x="91.03" y="3.45" width="6.9" height="31.03" fill="#2d2a25"/><rect x="103.68" y="19.54" width="18.39" height="32.18" fill="#97805a"/><rect x="114.02" y="19.54" width="7.47" height="12.64" fill="#b9aa88"/><rect x="85.29" y="29.89" width="13.79" height="16.09" fill="#5d543f"/><polygon points="94.48,50.57 123.79,55.17 123.79,66.67 105.98,73.56 94.48,66.67" fill="#2e2922"/><rect x="105.98" y="64.37" width="17.82" height="34.48" fill="#55583f"/><rect x="109.43" y="87.36" width="6.9" height="9.2" fill="#9aa39a"/><rect x="123.79" y="-2.3" width="62.64" height="103.45" fill="#6a5940"/><rect x="123.79" y="-2.3" width="62.64" height="17.24" fill="#8a744f"/><rect x="154.25" y="0.0" width="32.18" height="9.2" fill="#a88a58"/><polygon points="85.29,20.69 186.44,5.75 186.44,14.94 85.29,28.74" fill="#3b2f24"/><rect x="132.41" y="24.14" width="15.52" height="27.01" fill="#a3875c"/><rect x="133.56" y="34.48" width="13.79" height="5.75" fill="#8a6c48"/><rect x="163.45" y="32.18" width="16.09" height="25.29" fill="#9c835c"/><rect x="155.4" y="16.67" width="31.03" height="15.52" fill="#cfd0cd"/><rect x="178.39" y="32.18" width="8.05" height="18.39" fill="#d0cfc6"/><rect x="99.08" y="52.3" width="87.36" height="5.75" fill="#3b3026"/><rect x="123.79" y="58.05" width="62.64" height="22.41" fill="#53543f"/><rect x="132.41" y="65.52" width="11.49" height="12.64" fill="#8a9a8c"/><rect x="163.45" y="59.77" width="20.69" height="13.79" fill="#8c7a58"/><rect x="158.85" y="76.44" width="19.54" height="5.75" fill="#aeb8bc"/><line x1="126.09" y1="-2.3" x2="116.32" y2="101.15" stroke="#1f4133" stroke-width="2.76"/><line x1="156.55" y1="-2.3" x2="149.08" y2="101.15" stroke="#1f4133" stroke-width="2.53"/><line x1="160.0" y1="-2.3" x2="156.55" y2="101.15" stroke="#1f4133" stroke-width="1.84"/><line x1="169.2" y1="-2.3" x2="161.72" y2="101.15" stroke="#1f4133" stroke-width="2.3"/><line x1="127.82" y1="14.94" x2="149.66" y2="50.57" stroke="#3a3328" stroke-width="1.15"/><line x1="168.05" y1="18.39" x2="185.29" y2="32.18" stroke="#3a4038" stroke-width="0.92"/><rect x="150.8" y="36.78" width="9.43" height="7.13" fill="#e63a3e"/><rect x="152.18" y="37.7" width="6.67" height="2.53" fill="#ee8e8a"/><rect x="122.53" y="33.33" width="8.51" height="12.87" fill="#e6e8ea"/><rect x="124.6" y="37.93" width="3.22" height="5.75" fill="#27364f"/><rect x="120.34" y="79.89" width="54.6" height="28.39" fill="#b0966f"/><rect x="121.49" y="79.54" width="43.1" height="3.45" fill="#d3cab4"/><rect x="156.55" y="82.18" width="9.2" height="4.6" fill="#c3c8cc"/><rect x="158.28" y="89.08" width="9.77" height="5.75" fill="#cfd3d6"/><rect x="126.67" y="86.44" width="17.47" height="2.87" fill="#3e3226"/><rect x="147.36" y="87.59" width="21.26" height="2.76" fill="#3e3226"/><rect x="126.67" y="96.32" width="17.47" height="2.99" fill="#3e3226"/><rect x="147.36" y="97.01" width="21.26" height="2.99" fill="#3e3226"/><rect x="124.94" y="105.75" width="44.25" height="2.76" fill="#5a4a36"/><rect x="143.91" y="82.99" width="3.45" height="25.29" fill="#c4aa80"/><rect x="170.92" y="94.25" width="11.49" height="15.52" fill="#d9dbde"/><polygon points="178.97,75.29 186.44,75.29 186.44,102.87 175.86,101.15 179.54,87.36" fill="#d2e600"/><rect x="177.24" y="75.86" width="9.2" height="2.3" fill="#d9c74a"/><polygon points="78.16,109.77 87.59,105.17 95.4,108.28 95.17,118.39 86.44,123.56 78.62,119.54" fill="#9c8555"/><polygon points="78.16,109.77 87.59,105.17 95.4,108.28 86.44,112.64" fill="#c2ae80"/><polygon points="86.44,112.64 95.4,108.28 95.17,118.39 86.44,123.56" fill="#8a744a"/></g><linearGradient id="mgr2" x1="0" y1="0" x2="0" y2="1"><stop offset="0.66" stop-color="#fff"/><stop offset="0.76" stop-color="#666"/></linearGradient><mask id="mkr2"><rect x="0" y="0" width="185.3" height="140.2" fill="url(#mgr2)"/></mask><g mask="url(#mkr2)" style="mix-blend-mode:overlay"><rect x="0" y="0" width="185.3" height="140.2" filter="url(#nzr2)" opacity="0.45"/></g></svg></div>
<svg style="position:absolute;left:3142px;top:915px" width="36" height="36" viewBox="0 0 24 24" fill="none" stroke="#e2e5ea" stroke-width="2" stroke-linecap="round" stroke-linejoin="round"><path d="M3 12a9 9 0 1 0 18 0a9 9 0 0 0 -18 0"/><path d="M12 9h.01"/><path d="M11 12h1v4h1"/></svg>
<div class="row" style="top:1044px;height:207px;background:#2d3648"></div>
<svg style="position:absolute;left:48px;top:1129px" width="32" height="26" viewBox="0 0 32 26"><path d="M7 8.5 L16 17.5 L25 8.5" fill="none" stroke="#e2e5ea" stroke-width="3.4" stroke-linecap="round" stroke-linejoin="round"/></svg>
<div class="thumb" style="top:1071px"><svg width="185" height="140" viewBox="0 0 185.3 140.2" preserveAspectRatio="none"><defs><linearGradient id="flr3" x1="0" y1="0" x2="0" y2="1"><stop offset="0" stop-color="#6b7468"/><stop offset="1" stop-color="#929990"/></linearGradient><linearGradient id="air3" x1="0" y1="0" x2="0" y2="1"><stop offset="0" stop-color="#f1ecd6"/><stop offset="0.25" stop-color="#c9cbb6"/><stop offset="0.6" stop-color="#9aa395"/><stop offset="1" stop-color="#848d80"/></linearGradient><filter id="blr3" x="-5%" y="-5%" width="110%" height="110%"><feGaussianBlur stdDeviation="0.6"/><feColorMatrix type="saturate" values="0.78"/></filter><filter id="nzr3" x="0" y="0" width="100%" height="100%" color-interpolation-filters="sRGB"><feTurbulence type="fractalNoise" baseFrequency="0.22 0.3" numOctaves="3" seed="7"/><feColorMatrix type="saturate" values="0"/><feComponentTransfer><feFuncR type="linear" slope="2.4" intercept="-0.78"/><feFuncG type="linear" slope="2.4" intercept="-0.78"/><feFuncB type="linear" slope="2.4" intercept="-0.78"/><feFuncA type="linear" slope="0" intercept="1"/></feComponentTransfer></filter></defs><g filter="url(#blr3)"><rect x="-3" y="-3" width="191" height="146" fill="#4b4535"/><rect x="-3" y="100.57" width="191" height="43.23" fill="url(#flr3)"/><rect x="63.45" y="-2.3" width="21.84" height="27.59" fill="#cfc49a"/><rect x="68.62" y="6.9" width="8.62" height="17.24" fill="#f3efe2"/><rect x="64.6" y="14.94" width="6.9" height="9.2" fill="#d9b9a0"/><polygon points="65.17,24.14 77.24,24.14 81.84,45.98 91.03,65.52 100.23,80.46 120.92,101.15 57.13,101.15 60.57,80.46 64.02,59.77 66.32,37.93" fill="url(#air3)"/><rect x="-4.37" y="-2.3" width="68.97" height="12.07" fill="#8d7f52"/><rect x="27.24" y="0.57" width="25.86" height="8.05" fill="#d6cc9c"/><rect x="0.0" y="0.57" width="8.85" height="7.47" fill="#b9ad80"/><rect x="27.82" y="9.2" width="36.78" height="18.97" fill="#2a261f"/><rect x="-4.37" y="9.77" width="32.18" height="24.71" fill="#3a352a"/><rect x="0.0" y="28.74" width="8.85" height="11.49" fill="#a9a48e"/><rect x="29.54" y="28.74" width="26.44" height="26.44" fill="#86826f"/><rect x="32.41" y="32.18" width="11.49" height="18.39" fill="#9a968a"/><rect x="-4.37" y="45.98" width="22.99" height="29.89" fill="#332c25"/><rect x="18.62" y="56.32" width="39.08" height="44.83" fill="#4a3e30"/><rect x="31.26" y="66.67" width="21.84" height="8.05" fill="#6b5640"/><rect x="30.69" y="78.16" width="25.29" height="21.84" fill="#6c5b45"/><rect x="-4.37" y="75.86" width="22.99" height="25.29" fill="#5d5443"/><rect x="5.98" y="74.71" width="11.49" height="10.34" fill="#6f7480"/><rect x="0.0" y="85.06" width="18.62" height="11.49" fill="#86734f"/><rect x="0.0" y="95.98" width="19.77" height="5.17" fill="#9c8a60"/><rect x="41.61" y="87.36" width="11.49" height="9.2" fill="#8b7a5a"/><polygon points="57.7,24.14 66.32,24.14 66.32,37.93 64.02,59.77 60.57,80.46 57.7,100.0" fill="#2c2f27"/><line x1="9.66" y1="-2.3" x2="10.8" y2="101.72" stroke="#1f4133" stroke-width="2.3"/><line x1="13.45" y1="-2.3" x2="19.2" y2="101.72" stroke="#1f4133" stroke-width="2.53"/><line x1="23.22" y1="-2.3" x2="28.74" y2="101.72" stroke="#1f4133" stroke-width="2.99"/><line x1="54.48" y1="-2.3" x2="55.63" y2="101.72" stroke="#1f4133" stroke-width="2.3"/><line x1="59.43" y1="-2.3" x2="60.23" y2="101.72" stroke="#1f4133" stroke-width="1.61"/><line x1="30.11" y1="50.57" x2="57.7" y2="73.56" stroke="#3a3328" stroke-width="1.38"/><line x1="30.11" y1="89.66" x2="55.4" y2="71.26" stroke="#3a3328" stroke-width="1.15"/><rect x="13.79" y="35.63" width="9.66" height="7.47" fill="#e63a3e" rx="1"/><rect x="15.17" y="36.78" width="6.9" height="2.87" fill="#ef8a86"/><rect x="46.21" y="32.18" width="8.74" height="13.56" fill="#e9e9e6"/><rect x="48.85" y="36.78" width="4.25" height="5.98" fill="#27364f"/><rect x="52.41" y="61.49" width="7.82" height="6.55" fill="#dfe0e2"/><polygon points="77.24,24.14 82.99,-2.3 123.79,-2.3 123.79,101.15 100.23,80.46 91.03,65.52 81.84,45.98" fill="#4d4738"/><rect x="99.08" y="14.94" width="4.6" height="35.63" fill="#6f6650"/><rect x="84.14" y="14.94" width="6.32" height="17.24" fill="#7d735c"/><rect x="107.13" y="57.47" width="6.9" height="9.2" fill="#7a8078"/><rect x="85.29" y="-2.3" width="13.79" height="16.09" fill="#8c7a58"/><rect x="99.08" y="-2.3" width="24.71" height="17.24" fill="#9b8a68"/><rect x="91.03" y="3.45" width="6.9" height="31.03" fill="#2d2a25"/><rect x="103.68" y="19.54" width="18.39" height="32.18" fill="#97805a"/><rect x="114.02" y="19.54" width="7.47" height="12.64" fill="#b9aa88"/><rect x="85.29" y="29.89" width="13.79" height="16.09" fill="#5d543f"/><polygon points="94.48,50.57 123.79,55.17 123.79,66.67 105.98,73.56 94.48,66.67" fill="#2e2922"/><rect x="105.98" y="64.37" width="17.82" height="34.48" fill="#55583f"/><rect x="109.43" y="87.36" width="6.9" height="9.2" fill="#9aa39a"/><rect x="123.79" y="-2.3" width="62.64" height="103.45" fill="#6a5940"/><rect x="123.79" y="-2.3" width="62.64" height="17.24" fill="#8a744f"/><rect x="154.25" y="0.0" width="32.18" height="9.2" fill="#a88a58"/><polygon points="85.29,20.69 186.44,5.75 186.44,14.94 85.29,28.74" fill="#3b2f24"/><rect x="132.41" y="24.14" width="15.52" height="27.01" fill="#a3875c"/><rect x="133.56" y="34.48" width="13.79" height="5.75" fill="#8a6c48"/><rect x="163.45" y="32.18" width="16.09" height="25.29" fill="#9c835c"/><rect x="155.4" y="16.67" width="31.03" height="15.52" fill="#cfd0cd"/><rect x="178.39" y="32.18" width="8.05" height="18.39" fill="#d0cfc6"/><rect x="99.08" y="52.3" width="87.36" height="5.75" fill="#3b3026"/><rect x="123.79" y="58.05" width="62.64" height="22.41" fill="#53543f"/><rect x="132.41" y="65.52" width="11.49" height="12.64" fill="#8a9a8c"/><rect x="163.45" y="59.77" width="20.69" height="13.79" fill="#8c7a58"/><rect x="158.85" y="76.44" width="19.54" height="5.75" fill="#aeb8bc"/><line x1="126.09" y1="-2.3" x2="116.32" y2="101.15" stroke="#1f4133" stroke-width="2.76"/><line x1="156.55" y1="-2.3" x2="149.08" y2="101.15" stroke="#1f4133" stroke-width="2.53"/><line x1="160.0" y1="-2.3" x2="156.55" y2="101.15" stroke="#1f4133" stroke-width="1.84"/><line x1="169.2" y1="-2.3" x2="161.72" y2="101.15" stroke="#1f4133" stroke-width="2.3"/><line x1="127.82" y1="14.94" x2="149.66" y2="50.57" stroke="#3a3328" stroke-width="1.15"/><line x1="168.05" y1="18.39" x2="185.29" y2="32.18" stroke="#3a4038" stroke-width="0.92"/><rect x="150.8" y="36.78" width="9.43" height="7.13" fill="#e63a3e"/><rect x="152.18" y="37.7" width="6.67" height="2.53" fill="#ee8e8a"/><rect x="122.53" y="33.33" width="8.51" height="12.87" fill="#e6e8ea"/><rect x="124.6" y="37.93" width="3.22" height="5.75" fill="#27364f"/><rect x="120.34" y="79.89" width="54.6" height="28.39" fill="#b0966f"/><rect x="121.49" y="79.54" width="43.1" height="3.45" fill="#d3cab4"/><rect x="156.55" y="82.18" width="9.2" height="4.6" fill="#c3c8cc"/><rect x="158.28" y="89.08" width="9.77" height="5.75" fill="#cfd3d6"/><rect x="126.67" y="86.44" width="17.47" height="2.87" fill="#3e3226"/><rect x="147.36" y="87.59" width="21.26" height="2.76" fill="#3e3226"/><rect x="126.67" y="96.32" width="17.47" height="2.99" fill="#3e3226"/><rect x="147.36" y="97.01" width="21.26" height="2.99" fill="#3e3226"/><rect x="124.94" y="105.75" width="44.25" height="2.76" fill="#5a4a36"/><rect x="143.91" y="82.99" width="3.45" height="25.29" fill="#c4aa80"/><rect x="170.92" y="94.25" width="11.49" height="15.52" fill="#d9dbde"/><polygon points="178.97,75.29 186.44,75.29 186.44,102.87 175.86,101.15 179.54,87.36" fill="#d2e600"/><rect x="177.24" y="75.86" width="9.2" height="2.3" fill="#d9c74a"/><polygon points="78.16,109.77 87.59,105.17 95.4,108.28 95.17,118.39 86.44,123.56 78.62,119.54" fill="#9c8555"/><polygon points="78.16,109.77 87.59,105.17 95.4,108.28 86.44,112.64" fill="#c2ae80"/><polygon points="86.44,112.64 95.4,108.28 95.17,118.39 86.44,123.56" fill="#8a744a"/></g><linearGradient id="mgr3" x1="0" y1="0" x2="0" y2="1"><stop offset="0.66" stop-color="#fff"/><stop offset="0.76" stop-color="#666"/></linearGradient><mask id="mkr3"><rect x="0" y="0" width="185.3" height="140.2" fill="url(#mgr3)"/></mask><g mask="url(#mkr3)" style="mix-blend-mode:overlay"><rect x="0" y="0" width="185.3" height="140.2" filter="url(#nzr3)" opacity="0.45"/></g></svg></div>
<svg style="position:absolute;left:3142px;top:1124px" width="36" height="36" viewBox="0 0 24 24" fill="none" stroke="#e2e5ea" stroke-width="2" stroke-linecap="round" stroke-linejoin="round"><path d="M3 12a9 9 0 1 0 18 0a9 9 0 0 0 -18 0"/><path d="M12 9h.01"/><path d="M11 12h1v4h1"/></svg>
<div class="row" style="top:1251px;height:211px;background:#374152"></div>
<svg style="position:absolute;left:48px;top:1338px" width="32" height="26" viewBox="0 0 32 26"><path d="M7 8.5 L16 17.5 L25 8.5" fill="none" stroke="#e2e5ea" stroke-width="3.4" stroke-linecap="round" stroke-linejoin="round"/></svg>
<div class="thumb" style="top:1280px"><svg width="185" height="140" viewBox="0 0 185.3 140.2" preserveAspectRatio="none"><defs><linearGradient id="flr4" x1="0" y1="0" x2="0" y2="1"><stop offset="0" stop-color="#6b7468"/><stop offset="1" stop-color="#929990"/></linearGradient><linearGradient id="air4" x1="0" y1="0" x2="0" y2="1"><stop offset="0" stop-color="#f1ecd6"/><stop offset="0.25" stop-color="#c9cbb6"/><stop offset="0.6" stop-color="#9aa395"/><stop offset="1" stop-color="#848d80"/></linearGradient><filter id="blr4" x="-5%" y="-5%" width="110%" height="110%"><feGaussianBlur stdDeviation="0.6"/><feColorMatrix type="saturate" values="0.78"/></filter><filter id="nzr4" x="0" y="0" width="100%" height="100%" color-interpolation-filters="sRGB"><feTurbulence type="fractalNoise" baseFrequency="0.22 0.3" numOctaves="3" seed="7"/><feColorMatrix type="saturate" values="0"/><feComponentTransfer><feFuncR type="linear" slope="2.4" intercept="-0.78"/><feFuncG type="linear" slope="2.4" intercept="-0.78"/><feFuncB type="linear" slope="2.4" intercept="-0.78"/><feFuncA type="linear" slope="0" intercept="1"/></feComponentTransfer></filter></defs><g filter="url(#blr4)"><rect x="-3" y="-3" width="191" height="146" fill="#4b4535"/><rect x="-3" y="100.57" width="191" height="43.23" fill="url(#flr4)"/><rect x="63.45" y="-2.3" width="21.84" height="27.59" fill="#cfc49a"/><rect x="68.62" y="6.9" width="8.62" height="17.24" fill="#f3efe2"/><rect x="64.6" y="14.94" width="6.9" height="9.2" fill="#d9b9a0"/><polygon points="65.17,24.14 77.24,24.14 81.84,45.98 91.03,65.52 100.23,80.46 120.92,101.15 57.13,101.15 60.57,80.46 64.02,59.77 66.32,37.93" fill="url(#air4)"/><rect x="-4.37" y="-2.3" width="68.97" height="12.07" fill="#8d7f52"/><rect x="27.24" y="0.57" width="25.86" height="8.05" fill="#d6cc9c"/><rect x="0.0" y="0.57" width="8.85" height="7.47" fill="#b9ad80"/><rect x="27.82" y="9.2" width="36.78" height="18.97" fill="#2a261f"/><rect x="-4.37" y="9.77" width="32.18" height="24.71" fill="#3a352a"/><rect x="0.0" y="28.74" width="8.85" height="11.49" fill="#a9a48e"/><rect x="29.54" y="28.74" width="26.44" height="26.44" fill="#86826f"/><rect x="32.41" y="32.18" width="11.49" height="18.39" fill="#9a968a"/><rect x="-4.37" y="45.98" width="22.99" height="29.89" fill="#332c25"/><rect x="18.62" y="56.32" width="39.08" height="44.83" fill="#4a3e30"/><rect x="31.26" y="66.67" width="21.84" height="8.05" fill="#6b5640"/><rect x="30.69" y="78.16" width="25.29" height="21.84" fill="#6c5b45"/><rect x="-4.37" y="75.86" width="22.99" height="25.29" fill="#5d5443"/><rect x="5.98" y="74.71" width="11.49" height="10.34" fill="#6f7480"/><rect x="0.0" y="85.06" width="18.62" height="11.49" fill="#86734f"/><rect x="0.0" y="95.98" width="19.77" height="5.17" fill="#9c8a60"/><rect x="41.61" y="87.36" width="11.49" height="9.2" fill="#8b7a5a"/><polygon points="57.7,24.14 66.32,24.14 66.32,37.93 64.02,59.77 60.57,80.46 57.7,100.0" fill="#2c2f27"/><line x1="9.66" y1="-2.3" x2="10.8" y2="101.72" stroke="#1f4133" stroke-width="2.3"/><line x1="13.45" y1="-2.3" x2="19.2" y2="101.72" stroke="#1f4133" stroke-width="2.53"/><line x1="23.22" y1="-2.3" x2="28.74" y2="101.72" stroke="#1f4133" stroke-width="2.99"/><line x1="54.48" y1="-2.3" x2="55.63" y2="101.72" stroke="#1f4133" stroke-width="2.3"/><line x1="59.43" y1="-2.3" x2="60.23" y2="101.72" stroke="#1f4133" stroke-width="1.61"/><line x1="30.11" y1="50.57" x2="57.7" y2="73.56" stroke="#3a3328" stroke-width="1.38"/><line x1="30.11" y1="89.66" x2="55.4" y2="71.26" stroke="#3a3328" stroke-width="1.15"/><rect x="13.79" y="35.63" width="9.66" height="7.47" fill="#e63a3e" rx="1"/><rect x="15.17" y="36.78" width="6.9" height="2.87" fill="#ef8a86"/><rect x="46.21" y="32.18" width="8.74" height="13.56" fill="#e9e9e6"/><rect x="48.85" y="36.78" width="4.25" height="5.98" fill="#27364f"/><rect x="52.41" y="61.49" width="7.82" height="6.55" fill="#dfe0e2"/><polygon points="77.24,24.14 82.99,-2.3 123.79,-2.3 123.79,101.15 100.23,80.46 91.03,65.52 81.84,45.98" fill="#4d4738"/><rect x="99.08" y="14.94" width="4.6" height="35.63" fill="#6f6650"/><rect x="84.14" y="14.94" width="6.32" height="17.24" fill="#7d735c"/><rect x="107.13" y="57.47" width="6.9" height="9.2" fill="#7a8078"/><rect x="85.29" y="-2.3" width="13.79" height="16.09" fill="#8c7a58"/><rect x="99.08" y="-2.3" width="24.71" height="17.24" fill="#9b8a68"/><rect x="91.03" y="3.45" width="6.9" height="31.03" fill="#2d2a25"/><rect x="103.68" y="19.54" width="18.39" height="32.18" fill="#97805a"/><rect x="114.02" y="19.54" width="7.47" height="12.64" fill="#b9aa88"/><rect x="85.29" y="29.89" width="13.79" height="16.09" fill="#5d543f"/><polygon points="94.48,50.57 123.79,55.17 123.79,66.67 105.98,73.56 94.48,66.67" fill="#2e2922"/><rect x="105.98" y="64.37" width="17.82" height="34.48" fill="#55583f"/><rect x="109.43" y="87.36" width="6.9" height="9.2" fill="#9aa39a"/><rect x="123.79" y="-2.3" width="62.64" height="103.45" fill="#6a5940"/><rect x="123.79" y="-2.3" width="62.64" height="17.24" fill="#8a744f"/><rect x="154.25" y="0.0" width="32.18" height="9.2" fill="#a88a58"/><polygon points="85.29,20.69 186.44,5.75 186.44,14.94 85.29,28.74" fill="#3b2f24"/><rect x="132.41" y="24.14" width="15.52" height="27.01" fill="#a3875c"/><rect x="133.56" y="34.48" width="13.79" height="5.75" fill="#8a6c48"/><rect x="163.45" y="32.18" width="16.09" height="25.29" fill="#9c835c"/><rect x="155.4" y="16.67" width="31.03" height="15.52" fill="#cfd0cd"/><rect x="178.39" y="32.18" width="8.05" height="18.39" fill="#d0cfc6"/><rect x="99.08" y="52.3" width="87.36" height="5.75" fill="#3b3026"/><rect x="123.79" y="58.05" width="62.64" height="22.41" fill="#53543f"/><rect x="132.41" y="65.52" width="11.49" height="12.64" fill="#8a9a8c"/><rect x="163.45" y="59.77" width="20.69" height="13.79" fill="#8c7a58"/><rect x="158.85" y="76.44" width="19.54" height="5.75" fill="#aeb8bc"/><line x1="126.09" y1="-2.3" x2="116.32" y2="101.15" stroke="#1f4133" stroke-width="2.76"/><line x1="156.55" y1="-2.3" x2="149.08" y2="101.15" stroke="#1f4133" stroke-width="2.53"/><line x1="160.0" y1="-2.3" x2="156.55" y2="101.15" stroke="#1f4133" stroke-width="1.84"/><line x1="169.2" y1="-2.3" x2="161.72" y2="101.15" stroke="#1f4133" stroke-width="2.3"/><line x1="127.82" y1="14.94" x2="149.66" y2="50.57" stroke="#3a3328" stroke-width="1.15"/><line x1="168.05" y1="18.39" x2="185.29" y2="32.18" stroke="#3a4038" stroke-width="0.92"/><rect x="150.8" y="36.78" width="9.43" height="7.13" fill="#e63a3e"/><rect x="152.18" y="37.7" width="6.67" height="2.53" fill="#ee8e8a"/><rect x="122.53" y="33.33" width="8.51" height="12.87" fill="#e6e8ea"/><rect x="124.6" y="37.93" width="3.22" height="5.75" fill="#27364f"/><rect x="120.34" y="79.89" width="54.6" height="28.39" fill="#b0966f"/><rect x="121.49" y="79.54" width="43.1" height="3.45" fill="#d3cab4"/><rect x="156.55" y="82.18" width="9.2" height="4.6" fill="#c3c8cc"/><rect x="158.28" y="89.08" width="9.77" height="5.75" fill="#cfd3d6"/><rect x="126.67" y="86.44" width="17.47" height="2.87" fill="#3e3226"/><rect x="147.36" y="87.59" width="21.26" height="2.76" fill="#3e3226"/><rect x="126.67" y="96.32" width="17.47" height="2.99" fill="#3e3226"/><rect x="147.36" y="97.01" width="21.26" height="2.99" fill="#3e3226"/><rect x="124.94" y="105.75" width="44.25" height="2.76" fill="#5a4a36"/><rect x="143.91" y="82.99" width="3.45" height="25.29" fill="#c4aa80"/><rect x="170.92" y="94.25" width="11.49" height="15.52" fill="#d9dbde"/><polygon points="178.97,75.29 186.44,75.29 186.44,102.87 175.86,101.15 179.54,87.36" fill="#d2e600"/><rect x="177.24" y="75.86" width="9.2" height="2.3" fill="#d9c74a"/><polygon points="78.16,109.77 87.59,105.17 95.4,108.28 95.17,118.39 86.44,123.56 78.62,119.54" fill="#9c8555"/><polygon points="78.16,109.77 87.59,105.17 95.4,108.28 86.44,112.64" fill="#c2ae80"/><polygon points="86.44,112.64 95.4,108.28 95.17,118.39 86.44,123.56" fill="#8a744a"/></g><linearGradient id="mgr4" x1="0" y1="0" x2="0" y2="1"><stop offset="0.66" stop-color="#fff"/><stop offset="0.76" stop-color="#666"/></linearGradient><mask id="mkr4"><rect x="0" y="0" width="185.3" height="140.2" fill="url(#mgr4)"/></mask><g mask="url(#mkr4)" style="mix-blend-mode:overlay"><rect x="0" y="0" width="185.3" height="140.2" filter="url(#nzr4)" opacity="0.45"/></g></svg></div>
<svg style="position:absolute;left:3142px;top:1333px" width="36" height="36" viewBox="0 0 24 24" fill="none" stroke="#e2e5ea" stroke-width="2" stroke-linecap="round" stroke-linejoin="round"><path d="M3 12a9 9 0 1 0 18 0a9 9 0 0 0 -18 0"/><path d="M12 9h.01"/><path d="M11 12h1v4h1"/></svg>
<div class="row" style="top:1462px;height:207px;background:#2d3648"></div>
<svg style="position:absolute;left:48px;top:1547px" width="32" height="26" viewBox="0 0 32 26"><path d="M7 8.5 L16 17.5 L25 8.5" fill="none" stroke="#e2e5ea" stroke-width="3.4" stroke-linecap="round" stroke-linejoin="round"/></svg>
<div class="thumb" style="top:1489px"><svg width="185" height="140" viewBox="0 0 185.3 140.2" preserveAspectRatio="none"><defs><linearGradient id="flr5" x1="0" y1="0" x2="0" y2="1"><stop offset="0" stop-color="#6b7468"/><stop offset="1" stop-color="#929990"/></linearGradient><linearGradient id="air5" x1="0" y1="0" x2="0" y2="1"><stop offset="0" stop-color="#f1ecd6"/><stop offset="0.25" stop-color="#c9cbb6"/><stop offset="0.6" stop-color="#9aa395"/><stop offset="1" stop-color="#848d80"/></linearGradient><filter id="blr5" x="-5%" y="-5%" width="110%" height="110%"><feGaussianBlur stdDeviation="0.6"/><feColorMatrix type="saturate" values="0.78"/></filter><filter id="nzr5" x="0" y="0" width="100%" height="100%" color-interpolation-filters="sRGB"><feTurbulence type="fractalNoise" baseFrequency="0.22 0.3" numOctaves="3" seed="7"/><feColorMatrix type="saturate" values="0"/><feComponentTransfer><feFuncR type="linear" slope="2.4" intercept="-0.78"/><feFuncG type="linear" slope="2.4" intercept="-0.78"/><feFuncB type="linear" slope="2.4" intercept="-0.78"/><feFuncA type="linear" slope="0" intercept="1"/></feComponentTransfer></filter></defs><g filter="url(#blr5)"><rect x="-3" y="-3" width="191" height="146" fill="#4b4535"/><rect x="-3" y="100.57" width="191" height="43.23" fill="url(#flr5)"/><rect x="63.45" y="-2.3" width="21.84" height="27.59" fill="#cfc49a"/><rect x="68.62" y="6.9" width="8.62" height="17.24" fill="#f3efe2"/><rect x="64.6" y="14.94" width="6.9" height="9.2" fill="#d9b9a0"/><polygon points="65.17,24.14 77.24,24.14 81.84,45.98 91.03,65.52 100.23,80.46 120.92,101.15 57.13,101.15 60.57,80.46 64.02,59.77 66.32,37.93" fill="url(#air5)"/><rect x="-4.37" y="-2.3" width="68.97" height="12.07" fill="#8d7f52"/><rect x="27.24" y="0.57" width="25.86" height="8.05" fill="#d6cc9c"/><rect x="0.0" y="0.57" width="8.85" height="7.47" fill="#b9ad80"/><rect x="27.82" y="9.2" width="36.78" height="18.97" fill="#2a261f"/><rect x="-4.37" y="9.77" width="32.18" height="24.71" fill="#3a352a"/><rect x="0.0" y="28.74" width="8.85" height="11.49" fill="#a9a48e"/><rect x="29.54" y="28.74" width="26.44" height="26.44" fill="#86826f"/><rect x="32.41" y="32.18" width="11.49" height="18.39" fill="#9a968a"/><rect x="-4.37" y="45.98" width="22.99" height="29.89" fill="#332c25"/><rect x="18.62" y="56.32" width="39.08" height="44.83" fill="#4a3e30"/><rect x="31.26" y="66.67" width="21.84" height="8.05" fill="#6b5640"/><rect x="30.69" y="78.16" width="25.29" height="21.84" fill="#6c5b45"/><rect x="-4.37" y="75.86" width="22.99" height="25.29" fill="#5d5443"/><rect x="5.98" y="74.71" width="11.49" height="10.34" fill="#6f7480"/><rect x="0.0" y="85.06" width="18.62" height="11.49" fill="#86734f"/><rect x="0.0" y="95.98" width="19.77" height="5.17" fill="#9c8a60"/><rect x="41.61" y="87.36" width="11.49" height="9.2" fill="#8b7a5a"/><polygon points="57.7,24.14 66.32,24.14 66.32,37.93 64.02,59.77 60.57,80.46 57.7,100.0" fill="#2c2f27"/><line x1="9.66" y1="-2.3" x2="10.8" y2="101.72" stroke="#1f4133" stroke-width="2.3"/><line x1="13.45" y1="-2.3" x2="19.2" y2="101.72" stroke="#1f4133" stroke-width="2.53"/><line x1="23.22" y1="-2.3" x2="28.74" y2="101.72" stroke="#1f4133" stroke-width="2.99"/><line x1="54.48" y1="-2.3" x2="55.63" y2="101.72" stroke="#1f4133" stroke-width="2.3"/><line x1="59.43" y1="-2.3" x2="60.23" y2="101.72" stroke="#1f4133" stroke-width="1.61"/><line x1="30.11" y1="50.57" x2="57.7" y2="73.56" stroke="#3a3328" stroke-width="1.38"/><line x1="30.11" y1="89.66" x2="55.4" y2="71.26" stroke="#3a3328" stroke-width="1.15"/><rect x="13.79" y="35.63" width="9.66" height="7.47" fill="#e63a3e" rx="1"/><rect x="15.17" y="36.78" width="6.9" height="2.87" fill="#ef8a86"/><rect x="46.21" y="32.18" width="8.74" height="13.56" fill="#e9e9e6"/><rect x="48.85" y="36.78" width="4.25" height="5.98" fill="#27364f"/><rect x="52.41" y="61.49" width="7.82" height="6.55" fill="#dfe0e2"/><polygon points="77.24,24.14 82.99,-2.3 123.79,-2.3 123.79,101.15 100.23,80.46 91.03,65.52 81.84,45.98" fill="#4d4738"/><rect x="99.08" y="14.94" width="4.6" height="35.63" fill="#6f6650"/><rect x="84.14" y="14.94" width="6.32" height="17.24" fill="#7d735c"/><rect x="107.13" y="57.47" width="6.9" height="9.2" fill="#7a8078"/><rect x="85.29" y="-2.3" width="13.79" height="16.09" fill="#8c7a58"/><rect x="99.08" y="-2.3" width="24.71" height="17.24" fill="#9b8a68"/><rect x="91.03" y="3.45" width="6.9" height="31.03" fill="#2d2a25"/><rect x="103.68" y="19.54" width="18.39" height="32.18" fill="#97805a"/><rect x="114.02" y="19.54" width="7.47" height="12.64" fill="#b9aa88"/><rect x="85.29" y="29.89" width="13.79" height="16.09" fill="#5d543f"/><polygon points="94.48,50.57 123.79,55.17 123.79,66.67 105.98,73.56 94.48,66.67" fill="#2e2922"/><rect x="105.98" y="64.37" width="17.82" height="34.48" fill="#55583f"/><rect x="109.43" y="87.36" width="6.9" height="9.2" fill="#9aa39a"/><rect x="123.79" y="-2.3" width="62.64" height="103.45" fill="#6a5940"/><rect x="123.79" y="-2.3" width="62.64" height="17.24" fill="#8a744f"/><rect x="154.25" y="0.0" width="32.18" height="9.2" fill="#a88a58"/><polygon points="85.29,20.69 186.44,5.75 186.44,14.94 85.29,28.74" fill="#3b2f24"/><rect x="132.41" y="24.14" width="15.52" height="27.01" fill="#a3875c"/><rect x="133.56" y="34.48" width="13.79" height="5.75" fill="#8a6c48"/><rect x="163.45" y="32.18" width="16.09" height="25.29" fill="#9c835c"/><rect x="155.4" y="16.67" width="31.03" height="15.52" fill="#cfd0cd"/><rect x="178.39" y="32.18" width="8.05" height="18.39" fill="#d0cfc6"/><rect x="99.08" y="52.3" width="87.36" height="5.75" fill="#3b3026"/><rect x="123.79" y="58.05" width="62.64" height="22.41" fill="#53543f"/><rect x="132.41" y="65.52" width="11.49" height="12.64" fill="#8a9a8c"/><rect x="163.45" y="59.77" width="20.69" height="13.79" fill="#8c7a58"/><rect x="158.85" y="76.44" width="19.54" height="5.75" fill="#aeb8bc"/><line x1="126.09" y1="-2.3" x2="116.32" y2="101.15" stroke="#1f4133" stroke-width="2.76"/><line x1="156.55" y1="-2.3" x2="149.08" y2="101.15" stroke="#1f4133" stroke-width="2.53"/><line x1="160.0" y1="-2.3" x2="156.55" y2="101.15" stroke="#1f4133" stroke-width="1.84"/><line x1="169.2" y1="-2.3" x2="161.72" y2="101.15" stroke="#1f4133" stroke-width="2.3"/><line x1="127.82" y1="14.94" x2="149.66" y2="50.57" stroke="#3a3328" stroke-width="1.15"/><line x1="168.05" y1="18.39" x2="185.29" y2="32.18" stroke="#3a4038" stroke-width="0.92"/><rect x="150.8" y="36.78" width="9.43" height="7.13" fill="#e63a3e"/><rect x="152.18" y="37.7" width="6.67" height="2.53" fill="#ee8e8a"/><rect x="122.53" y="33.33" width="8.51" height="12.87" fill="#e6e8ea"/><rect x="124.6" y="37.93" width="3.22" height="5.75" fill="#27364f"/><rect x="120.34" y="79.89" width="54.6" height="28.39" fill="#b0966f"/><rect x="121.49" y="79.54" width="43.1" height="3.45" fill="#d3cab4"/><rect x="156.55" y="82.18" width="9.2" height="4.6" fill="#c3c8cc"/><rect x="158.28" y="89.08" width="9.77" height="5.75" fill="#cfd3d6"/><rect x="126.67" y="86.44" width="17.47" height="2.87" fill="#3e3226"/><rect x="147.36" y="87.59" width="21.26" height="2.76" fill="#3e3226"/><rect x="126.67" y="96.32" width="17.47" height="2.99" fill="#3e3226"/><rect x="147.36" y="97.01" width="21.26" height="2.99" fill="#3e3226"/><rect x="124.94" y="105.75" width="44.25" height="2.76" fill="#5a4a36"/><rect x="143.91" y="82.99" width="3.45" height="25.29" fill="#c4aa80"/><rect x="170.92" y="94.25" width="11.49" height="15.52" fill="#d9dbde"/><polygon points="178.97,75.29 186.44,75.29 186.44,102.87 175.86,101.15 179.54,87.36" fill="#d2e600"/><rect x="177.24" y="75.86" width="9.2" height="2.3" fill="#d9c74a"/><polygon points="78.16,109.77 87.59,105.17 95.4,108.28 95.17,118.39 86.44,123.56 78.62,119.54" fill="#9c8555"/><polygon points="78.16,109.77 87.59,105.17 95.4,108.28 86.44,112.64" fill="#c2ae80"/><polygon points="86.44,112.64 95.4,108.28 95.17,118.39 86.44,123.56" fill="#8a744a"/></g><linearGradient id="mgr5" x1="0" y1="0" x2="0" y2="1"><stop offset="0.66" stop-color="#fff"/><stop offset="0.76" stop-color="#666"/></linearGradient><mask id="mkr5"><rect x="0" y="0" width="185.3" height="140.2" fill="url(#mgr5)"/></mask><g mask="url(#mkr5)" style="mix-blend-mode:overlay"><rect x="0" y="0" width="185.3" height="140.2" filter="url(#nzr5)" opacity="0.45"/></g><rect x="77.3" y="45.6" width="3.2" height="4.4" fill="#b9c832"/><rect x="77.8" y="50" width="2.2" height="4" fill="#20242c"/></svg></div>
<svg style="position:absolute;left:3142px;top:1542px" width="36" height="36" viewBox="0 0 24 24" fill="none" stroke="#e2e5ea" stroke-width="2" stroke-linecap="round" stroke-linejoin="round"><path d="M3 12a9 9 0 1 0 18 0a9 9 0 0 0 -18 0"/><path d="M12 9h.01"/><path d="M11 12h1v4h1"/></svg>
<div class="row" style="top:1669px;height:211px;background:#374152"></div>
<svg style="position:absolute;left:48px;top:1756px" width="32" height="26" viewBox="0 0 32 26"><path d="M7 8.5 L16 17.5 L25 8.5" fill="none" stroke="#e2e5ea" stroke-width="3.4" stroke-linecap="round" stroke-linejoin="round"/></svg>
<div class="thumb" style="top:1698px"><svg width="185" height="140" viewBox="0 0 185.3 140.2" preserveAspectRatio="none"><defs><linearGradient id="flr6" x1="0" y1="0" x2="0" y2="1"><stop offset="0" stop-color="#6b7468"/><stop offset="1" stop-color="#929990"/></linearGradient><linearGradient id="air6" x1="0" y1="0" x2="0" y2="1"><stop offset="0" stop-color="#f1ecd6"/><stop offset="0.25" stop-color="#c9cbb6"/><stop offset="0.6" stop-color="#9aa395"/><stop offset="1" stop-color="#848d80"/></linearGradient><filter id="blr6" x="-5%" y="-5%" width="110%" height="110%"><feGaussianBlur stdDeviation="0.6"/><feColorMatrix type="saturate" values="0.78"/></filter><filter id="nzr6" x="0" y="0" width="100%" height="100%" color-interpolation-filters="sRGB"><feTurbulence type="fractalNoise" baseFrequency="0.22 0.3" numOctaves="3" seed="7"/><feColorMatrix type="saturate" values="0"/><feComponentTransfer><feFuncR type="linear" slope="2.4" intercept="-0.78"/><feFuncG type="linear" slope="2.4" intercept="-0.78"/><feFuncB type="linear" slope="2.4" intercept="-0.78"/><feFuncA type="linear" slope="0" intercept="1"/></feComponentTransfer></filter></defs><g filter="url(#blr6)"><rect x="-3" y="-3" width="191" height="146" fill="#4b4535"/><rect x="-3" y="100.57" width="191" height="43.23" fill="url(#flr6)"/><rect x="63.45" y="-2.3" width="21.84" height="27.59" fill="#cfc49a"/><rect x="68.62" y="6.9" width="8.62" height="17.24" fill="#f3efe2"/><rect x="64.6" y="14.94" width="6.9" height="9.2" fill="#d9b9a0"/><polygon points="65.17,24.14 77.24,24.14 81.84,45.98 91.03,65.52 100.23,80.46 120.92,101.15 57.13,101.15 60.57,80.46 64.02,59.77 66.32,37.93" fill="url(#air6)"/><rect x="-4.37" y="-2.3" width="68.97" height="12.07" fill="#8d7f52"/><rect x="27.24" y="0.57" width="25.86" height="8.05" fill="#d6cc9c"/><rect x="0.0" y="0.57" width="8.85" height="7.47" fill="#b9ad80"/><rect x="27.82" y="9.2" width="36.78" height="18.97" fill="#2a261f"/><rect x="-4.37" y="9.77" width="32.18" height="24.71" fill="#3a352a"/><rect x="0.0" y="28.74" width="8.85" height="11.49" fill="#a9a48e"/><rect x="29.54" y="28.74" width="26.44" height="26.44" fill="#86826f"/><rect x="32.41" y="32.18" width="11.49" height="18.39" fill="#9a968a"/><rect x="-4.37" y="45.98" width="22.99" height="29.89" fill="#332c25"/><rect x="18.62" y="56.32" width="39.08" height="44.83" fill="#4a3e30"/><rect x="31.26" y="66.67" width="21.84" height="8.05" fill="#6b5640"/><rect x="30.69" y="78.16" width="25.29" height="21.84" fill="#6c5b45"/><rect x="-4.37" y="75.86" width="22.99" height="25.29" fill="#5d5443"/><rect x="5.98" y="74.71" width="11.49" height="10.34" fill="#6f7480"/><rect x="0.0" y="85.06" width="18.62" height="11.49" fill="#86734f"/><rect x="0.0" y="95.98" width="19.77" height="5.17" fill="#9c8a60"/><rect x="41.61" y="87.36" width="11.49" height="9.2" fill="#8b7a5a"/><polygon points="57.7,24.14 66.32,24.14 66.32,37.93 64.02,59.77 60.57,80.46 57.7,100.0" fill="#2c2f27"/><line x1="9.66" y1="-2.3" x2="10.8" y2="101.72" stroke="#1f4133" stroke-width="2.3"/><line x1="13.45" y1="-2.3" x2="19.2" y2="101.72" stroke="#1f4133" stroke-width="2.53"/><line x1="23.22" y1="-2.3" x2="28.74" y2="101.72" stroke="#1f4133" stroke-width="2.99"/><line x1="54.48" y1="-2.3" x2="55.63" y2="101.72" stroke="#1f4133" stroke-width="2.3"/><line x1="59.43" y1="-2.3" x2="60.23" y2="101.72" stroke="#1f4133" stroke-width="1.61"/><line x1="30.11" y1="50.57" x2="57.7" y2="73.56" stroke="#3a3328" stroke-width="1.38"/><line x1="30.11" y1="89.66" x2="55.4" y2="71.26" stroke="#3a3328" stroke-width="1.15"/><rect x="13.79" y="35.63" width="9.66" height="7.47" fill="#e63a3e" rx="1"/><rect x="15.17" y="36.78" width="6.9" height="2.87" fill="#ef8a86"/><rect x="46.21" y="32.18" width="8.74" height="13.56" fill="#e9e9e6"/><rect x="48.85" y="36.78" width="4.25" height="5.98" fill="#27364f"/><rect x="52.41" y="61.49" width="7.82" height="6.55" fill="#dfe0e2"/><polygon points="77.24,24.14 82.99,-2.3 123.79,-2.3 123.79,101.15 100.23,80.46 91.03,65.52 81.84,45.98" fill="#4d4738"/><rect x="99.08" y="14.94" width="4.6" height="35.63" fill="#6f6650"/><rect x="84.14" y="14.94" width="6.32" height="17.24" fill="#7d735c"/><rect x="107.13" y="57.47" width="6.9" height="9.2" fill="#7a8078"/><rect x="85.29" y="-2.3" width="13.79" height="16.09" fill="#8c7a58"/><rect x="99.08" y="-2.3" width="24.71" height="17.24" fill="#9b8a68"/><rect x="91.03" y="3.45" width="6.9" height="31.03" fill="#2d2a25"/><rect x="103.68" y="19.54" width="18.39" height="32.18" fill="#97805a"/><rect x="114.02" y="19.54" width="7.47" height="12.64" fill="#b9aa88"/><rect x="85.29" y="29.89" width="13.79" height="16.09" fill="#5d543f"/><polygon points="94.48,50.57 123.79,55.17 123.79,66.67 105.98,73.56 94.48,66.67" fill="#2e2922"/><rect x="105.98" y="64.37" width="17.82" height="34.48" fill="#55583f"/><rect x="109.43" y="87.36" width="6.9" height="9.2" fill="#9aa39a"/><rect x="123.79" y="-2.3" width="62.64" height="103.45" fill="#6a5940"/><rect x="123.79" y="-2.3" width="62.64" height="17.24" fill="#8a744f"/><rect x="154.25" y="0.0" width="32.18" height="9.2" fill="#a88a58"/><polygon points="85.29,20.69 186.44,5.75 186.44,14.94 85.29,28.74" fill="#3b2f24"/><rect x="132.41" y="24.14" width="15.52" height="27.01" fill="#a3875c"/><rect x="133.56" y="34.48" width="13.79" height="5.75" fill="#8a6c48"/><rect x="163.45" y="32.18" width="16.09" height="25.29" fill="#9c835c"/><rect x="155.4" y="16.67" width="31.03" height="15.52" fill="#cfd0cd"/><rect x="178.39" y="32.18" width="8.05" height="18.39" fill="#d0cfc6"/><rect x="99.08" y="52.3" width="87.36" height="5.75" fill="#3b3026"/><rect x="123.79" y="58.05" width="62.64" height="22.41" fill="#53543f"/><rect x="132.41" y="65.52" width="11.49" height="12.64" fill="#8a9a8c"/><rect x="163.45" y="59.77" width="20.69" height="13.79" fill="#8c7a58"/><rect x="158.85" y="76.44" width="19.54" height="5.75" fill="#aeb8bc"/><line x1="126.09" y1="-2.3" x2="116.32" y2="101.15" stroke="#1f4133" stroke-width="2.76"/><line x1="156.55" y1="-2.3" x2="149.08" y2="101.15" stroke="#1f4133" stroke-width="2.53"/><line x1="160.0" y1="-2.3" x2="156.55" y2="101.15" stroke="#1f4133" stroke-width="1.84"/><line x1="169.2" y1="-2.3" x2="161.72" y2="101.15" stroke="#1f4133" stroke-width="2.3"/><line x1="127.82" y1="14.94" x2="149.66" y2="50.57" stroke="#3a3328" stroke-width="1.15"/><line x1="168.05" y1="18.39" x2="185.29" y2="32.18" stroke="#3a4038" stroke-width="0.92"/><rect x="150.8" y="36.78" width="9.43" height="7.13" fill="#e63a3e"/><rect x="152.18" y="37.7" width="6.67" height="2.53" fill="#ee8e8a"/><rect x="122.53" y="33.33" width="8.51" height="12.87" fill="#e6e8ea"/><rect x="124.6" y="37.93" width="3.22" height="5.75" fill="#27364f"/><rect x="120.34" y="79.89" width="54.6" height="28.39" fill="#b0966f"/><rect x="121.49" y="79.54" width="43.1" height="3.45" fill="#d3cab4"/><rect x="156.55" y="82.18" width="9.2" height="4.6" fill="#c3c8cc"/><rect x="158.28" y="89.08" width="9.77" height="5.75" fill="#cfd3d6"/><rect x="126.67" y="86.44" width="17.47" height="2.87" fill="#3e3226"/><rect x="147.36" y="87.59" width="21.26" height="2.76" fill="#3e3226"/><rect x="126.67" y="96.32" width="17.47" height="2.99" fill="#3e3226"/><rect x="147.36" y="97.01" width="21.26" height="2.99" fill="#3e3226"/><rect x="124.94" y="105.75" width="44.25" height="2.76" fill="#5a4a36"/><rect x="143.91" y="82.99" width="3.45" height="25.29" fill="#c4aa80"/><rect x="170.92" y="94.25" width="11.49" height="15.52" fill="#d9dbde"/><polygon points="178.97,75.29 186.44,75.29 186.44,102.87 175.86,101.15 179.54,87.36" fill="#d2e600"/><rect x="177.24" y="75.86" width="9.2" height="2.3" fill="#d9c74a"/><g transform="translate(0,-1.1)"><ellipse cx="80.69" cy="124.71" rx="9.2" ry="2.53" fill="#3d4038"/><ellipse cx="94.48" cy="112.07" rx="6.9" ry="2.3" fill="#4a4d44"/><polygon points="88.16,90.23 99.66,90.23 99.08,111.49 93.91,112.07 93.33,98.85 92.18,110.92 88.74,108.05" fill="#161b2b"/><rect x="90.46" y="70.69" width="4.6" height="7.47" fill="#1c1e24"/><polygon points="93.33,68.39 104.25,69.54 103.68,90.23 88.16,89.66 89.31,78.16" fill="#d4e800"/><rect x="89.31" y="82.18" width="14.37" height="2.3" fill="#dfe0c8"/><polygon points="81.84,80.46 91.03,77.01 92.18,81.61 82.99,83.91" fill="#a07850"/><polygon points="77.82,75.29 90.46,72.18 91.61,77.01 79.54,79.89" fill="#cfc8ba"/><rect x="92.76" y="63.79" width="5.75" height="5.17" fill="#5a4030"/><polygon points="91.61,64.37 93.33,60.34 97.93,59.77 99.66,64.37" fill="#f0d800"/><polygon points="72.64,111.49 79.54,105.75 88.16,109.77 86.44,120.69 76.09,123.56 72.07,118.39" fill="#b09665"/><polygon points="72.64,111.49 79.54,105.75 88.16,109.77 81.84,113.79" fill="#cdb98a"/></g></g><linearGradient id="mgr6" x1="0" y1="0" x2="0" y2="1"><stop offset="0.66" stop-color="#fff"/><stop offset="0.76" stop-color="#666"/></linearGradient><mask id="mkr6"><rect x="0" y="0" width="185.3" height="140.2" fill="url(#mgr6)"/></mask><g mask="url(#mkr6)" style="mix-blend-mode:overlay"><rect x="0" y="0" width="185.3" height="140.2" filter="url(#nzr6)" opacity="0.45"/></g></svg></div>
<svg style="position:absolute;left:3142px;top:1751px" width="36" height="36" viewBox="0 0 24 24" fill="none" stroke="#e2e5ea" stroke-width="2" stroke-linecap="round" stroke-linejoin="round"><path d="M3 12a9 9 0 1 0 18 0a9 9 0 0 0 -18 0"/><path d="M12 9h.01"/><path d="M11 12h1v4h1"/></svg>
<div class="row" style="top:1880px;height:207px;background:#2d3648"></div>
<svg style="position:absolute;left:48px;top:1965px" width="32" height="26" viewBox="0 0 32 26"><path d="M7 8.5 L16 17.5 L25 8.5" fill="none" stroke="#e2e5ea" stroke-width="3.4" stroke-linecap="round" stroke-linejoin="round"/></svg>
<div class="thumb" style="top:1907px"><svg width="185" height="140" viewBox="0 0 185.3 140.2" preserveAspectRatio="none"><defs><linearGradient id="flr7" x1="0" y1="0" x2="0" y2="1"><stop offset="0" stop-color="#6b7468"/><stop offset="1" stop-color="#929990"/></linearGradient><linearGradient id="air7" x1="0" y1="0" x2="0" y2="1"><stop offset="0" stop-color="#f1ecd6"/><stop offset="0.25" stop-color="#c9cbb6"/><stop offset="0.6" stop-color="#9aa395"/><stop offset="1" stop-color="#848d80"/></linearGradient><filter id="blr7" x="-5%" y="-5%" width="110%" height="110%"><feGaussianBlur stdDeviation="0.6"/><feColorMatrix type="saturate" values="0.78"/></filter><filter id="nzr7" x="0" y="0" width="100%" height="100%" color-interpolation-filters="sRGB"><feTurbulence type="fractalNoise" baseFrequency="0.22 0.3" numOctaves="3" seed="7"/><feColorMatrix type="saturate" values="0"/><feComponentTransfer><feFuncR type="linear" slope="2.4" intercept="-0.78"/><feFuncG type="linear" slope="2.4" intercept="-0.78"/><feFuncB type="linear" slope="2.4" intercept="-0.78"/><feFuncA type="linear" slope="0" intercept="1"/></feComponentTransfer></filter></defs><g filter="url(#blr7)"><rect x="-3" y="-3" width="191" height="146" fill="#4b4535"/><rect x="-3" y="100.57" width="191" height="43.23" fill="url(#flr7)"/><rect x="63.45" y="-2.3" width="21.84" height="27.59" fill="#cfc49a"/><rect x="68.62" y="6.9" width="8.62" height="17.24" fill="#f3efe2"/><rect x="64.6" y="14.94" width="6.9" height="9.2" fill="#d9b9a0"/><polygon points="65.17,24.14 77.24,24.14 81.84,45.98 91.03,65.52 100.23,80.46 120.92,101.15 57.13,101.15 60.57,80.46 64.02,59.77 66.32,37.93" fill="url(#air7)"/><rect x="-4.37" y="-2.3" width="68.97" height="12.07" fill="#8d7f52"/><rect x="27.24" y="0.57" width="25.86" height="8.05" fill="#d6cc9c"/><rect x="0.0" y="0.57" width="8.85" height="7.47" fill="#b9ad80"/><rect x="27.82" y="9.2" width="36.78" height="18.97" fill="#2a261f"/><rect x="-4.37" y="9.77" width="32.18" height="24.71" fill="#3a352a"/><rect x="0.0" y="28.74" width="8.85" height="11.49" fill="#a9a48e"/><rect x="29.54" y="28.74" width="26.44" height="26.44" fill="#86826f"/><rect x="32.41" y="32.18" width="11.49" height="18.39" fill="#9a968a"/><rect x="-4.37" y="45.98" width="22.99" height="29.89" fill="#332c25"/><rect x="18.62" y="56.32" width="39.08" height="44.83" fill="#4a3e30"/><rect x="31.26" y="66.67" width="21.84" height="8.05" fill="#6b5640"/><rect x="30.69" y="78.16" width="25.29" height="21.84" fill="#6c5b45"/><rect x="-4.37" y="75.86" width="22.99" height="25.29" fill="#5d5443"/><rect x="5.98" y="74.71" width="11.49" height="10.34" fill="#6f7480"/><rect x="0.0" y="85.06" width="18.62" height="11.49" fill="#86734f"/><rect x="0.0" y="95.98" width="19.77" height="5.17" fill="#9c8a60"/><rect x="41.61" y="87.36" width="11.49" height="9.2" fill="#8b7a5a"/><polygon points="57.7,24.14 66.32,24.14 66.32,37.93 64.02,59.77 60.57,80.46 57.7,100.0" fill="#2c2f27"/><line x1="9.66" y1="-2.3" x2="10.8" y2="101.72" stroke="#1f4133" stroke-width="2.3"/><line x1="13.45" y1="-2.3" x2="19.2" y2="101.72" stroke="#1f4133" stroke-width="2.53"/><line x1="23.22" y1="-2.3" x2="28.74" y2="101.72" stroke="#1f4133" stroke-width="2.99"/><line x1="54.48" y1="-2.3" x2="55.63" y2="101.72" stroke="#1f4133" stroke-width="2.3"/><line x1="59.43" y1="-2.3" x2="60.23" y2="101.72" stroke="#1f4133" stroke-width="1.61"/><line x1="30.11" y1="50.57" x2="57.7" y2="73.56" stroke="#3a3328" stroke-width="1.38"/><line x1="30.11" y1="89.66" x2="55.4" y2="71.26" stroke="#3a3328" stroke-width="1.15"/><rect x="13.79" y="35.63" width="9.66" height="7.47" fill="#e63a3e" rx="1"/><rect x="15.17" y="36.78" width="6.9" height="2.87" fill="#ef8a86"/><rect x="46.21" y="32.18" width="8.74" height="13.56" fill="#e9e9e6"/><rect x="48.85" y="36.78" width="4.25" height="5.98" fill="#27364f"/><rect x="52.41" y="61.49" width="7.82" height="6.55" fill="#dfe0e2"/><polygon points="77.24,24.14 82.99,-2.3 123.79,-2.3 123.79,101.15 100.23,80.46 91.03,65.52 81.84,45.98" fill="#4d4738"/><rect x="99.08" y="14.94" width="4.6" height="35.63" fill="#6f6650"/><rect x="84.14" y="14.94" width="6.32" height="17.24" fill="#7d735c"/><rect x="107.13" y="57.47" width="6.9" height="9.2" fill="#7a8078"/><rect x="85.29" y="-2.3" width="13.79" height="16.09" fill="#8c7a58"/><rect x="99.08" y="-2.3" width="24.71" height="17.24" fill="#9b8a68"/><rect x="91.03" y="3.45" width="6.9" height="31.03" fill="#2d2a25"/><rect x="103.68" y="19.54" width="18.39" height="32.18" fill="#97805a"/><rect x="114.02" y="19.54" width="7.47" height="12.64" fill="#b9aa88"/><rect x="85.29" y="29.89" width="13.79" height="16.09" fill="#5d543f"/><polygon points="94.48,50.57 123.79,55.17 123.79,66.67 105.98,73.56 94.48,66.67" fill="#2e2922"/><rect x="105.98" y="64.37" width="17.82" height="34.48" fill="#55583f"/><rect x="109.43" y="87.36" width="6.9" height="9.2" fill="#9aa39a"/><rect x="123.79" y="-2.3" width="62.64" height="103.45" fill="#6a5940"/><rect x="123.79" y="-2.3" width="62.64" height="17.24" fill="#8a744f"/><rect x="154.25" y="0.0" width="32.18" height="9.2" fill="#a88a58"/><polygon points="85.29,20.69 186.44,5.75 186.44,14.94 85.29,28.74" fill="#3b2f24"/><rect x="132.41" y="24.14" width="15.52" height="27.01" fill="#a3875c"/><rect x="133.56" y="34.48" width="13.79" height="5.75" fill="#8a6c48"/><rect x="163.45" y="32.18" width="16.09" height="25.29" fill="#9c835c"/><rect x="155.4" y="16.67" width="31.03" height="15.52" fill="#cfd0cd"/><rect x="178.39" y="32.18" width="8.05" height="18.39" fill="#d0cfc6"/><rect x="99.08" y="52.3" width="87.36" height="5.75" fill="#3b3026"/><rect x="123.79" y="58.05" width="62.64" height="22.41" fill="#53543f"/><rect x="132.41" y="65.52" width="11.49" height="12.64" fill="#8a9a8c"/><rect x="163.45" y="59.77" width="20.69" height="13.79" fill="#8c7a58"/><rect x="158.85" y="76.44" width="19.54" height="5.75" fill="#aeb8bc"/><line x1="126.09" y1="-2.3" x2="116.32" y2="101.15" stroke="#1f4133" stroke-width="2.76"/><line x1="156.55" y1="-2.3" x2="149.08" y2="101.15" stroke="#1f4133" stroke-width="2.53"/><line x1="160.0" y1="-2.3" x2="156.55" y2="101.15" stroke="#1f4133" stroke-width="1.84"/><line x1="169.2" y1="-2.3" x2="161.72" y2="101.15" stroke="#1f4133" stroke-width="2.3"/><line x1="127.82" y1="14.94" x2="149.66" y2="50.57" stroke="#3a3328" stroke-width="1.15"/><line x1="168.05" y1="18.39" x2="185.29" y2="32.18" stroke="#3a4038" stroke-width="0.92"/><rect x="150.8" y="36.78" width="9.43" height="7.13" fill="#e63a3e"/><rect x="152.18" y="37.7" width="6.67" height="2.53" fill="#ee8e8a"/><rect x="122.53" y="33.33" width="8.51" height="12.87" fill="#e6e8ea"/><rect x="124.6" y="37.93" width="3.22" height="5.75" fill="#27364f"/><rect x="120.34" y="79.89" width="54.6" height="28.39" fill="#b0966f"/><rect x="121.49" y="79.54" width="43.1" height="3.45" fill="#d3cab4"/><rect x="156.55" y="82.18" width="9.2" height="4.6" fill="#c3c8cc"/><rect x="158.28" y="89.08" width="9.77" height="5.75" fill="#cfd3d6"/><rect x="126.67" y="86.44" width="17.47" height="2.87" fill="#3e3226"/><rect x="147.36" y="87.59" width="21.26" height="2.76" fill="#3e3226"/><rect x="126.67" y="96.32" width="17.47" height="2.99" fill="#3e3226"/><rect x="147.36" y="97.01" width="21.26" height="2.99" fill="#3e3226"/><rect x="124.94" y="105.75" width="44.25" height="2.76" fill="#5a4a36"/><rect x="143.91" y="82.99" width="3.45" height="25.29" fill="#c4aa80"/><rect x="170.92" y="94.25" width="11.49" height="15.52" fill="#d9dbde"/><polygon points="178.97,75.29 186.44,75.29 186.44,102.87 175.86,101.15 179.54,87.36" fill="#d2e600"/><rect x="177.24" y="75.86" width="9.2" height="2.3" fill="#d9c74a"/><polygon points="78.16,109.77 87.59,105.17 95.4,108.28 95.17,118.39 86.44,123.56 78.62,119.54" fill="#9c8555"/><polygon points="78.16,109.77 87.59,105.17 95.4,108.28 86.44,112.64" fill="#c2ae80"/><polygon points="86.44,112.64 95.4,108.28 95.17,118.39 86.44,123.56" fill="#8a744a"/></g><linearGradient id="mgr7" x1="0" y1="0" x2="0" y2="1"><stop offset="0.66" stop-color="#fff"/><stop offset="0.76" stop-color="#666"/></linearGradient><mask id="mkr7"><rect x="0" y="0" width="185.3" height="140.2" fill="url(#mgr7)"/></mask><g mask="url(#mkr7)" style="mix-blend-mode:overlay"><rect x="0" y="0" width="185.3" height="140.2" filter="url(#nzr7)" opacity="0.45"/></g></svg></div>
<svg style="position:absolute;left:3142px;top:1960px" width="36" height="36" viewBox="0 0 24 24" fill="none" stroke="#e2e5ea" stroke-width="2" stroke-linecap="round" stroke-linejoin="round"><path d="M3 12a9 9 0 1 0 18 0a9 9 0 0 0 -18 0"/><path d="M12 9h.01"/><path d="M11 12h1v4h1"/></svg>
<div class="t" style="left:96.0px;top:92.0px;font-size:33px;letter-spacing:0.709px;color:#d1d5db;-webkit-text-stroke:0.4px #d1d5db">VLM Verified</div>
<div class="t" style="left:464.0px;top:92.0px;font-size:33px;letter-spacing:1.077px;color:#d1d5db;-webkit-text-stroke:0.4px #d1d5db">Verdict:</div>
<div class="t" style="left:636.0px;top:92.0px;font-size:33px;letter-spacing:0.206px;color:#d1d5db;-webkit-text-stroke:0.25px #d1d5db">All</div>
<div class="t" style="left:1065.1px;top:92.0px;font-size:33px;letter-spacing:0.706px;color:#d1d5db;-webkit-text-stroke:0.4px #d1d5db">Period:</div>
<div class="t" style="left:1227.0px;top:92.0px;font-size:33px;letter-spacing:-1.202px;color:#d1d5db;-webkit-text-stroke:0.25px #d1d5db">10m</div>
<div class="t" style="left:1512.8px;top:92.0px;font-size:33px;letter-spacing:0.094px;color:#d1d5db;-webkit-text-stroke:0.25px #d1d5db">Sensor...</div>
<div class="t" style="left:1968.0px;top:92.0px;font-size:33px;letter-spacing:0.468px;color:#d1d5db;-webkit-text-stroke:0.25px #d1d5db">Alert Type...</div>
<div class="t" style="left:2318.0px;top:92.0px;font-size:33px;letter-spacing:0.473px;color:#d1d5db;-webkit-text-stroke:0.25px #d1d5db">Alert Triggered...</div>
<div class="t" style="left:78.0px;top:251.0px;font-size:32.5px;letter-spacing:0.665px;color:#d1d5db;-webkit-text-stroke:0.4px #d1d5db">Alerts Displayed:</div>
<div class="t" style="left:415.5px;top:360.0px;font-size:22.5px;letter-spacing:0.676px;color:#d1d5db;-webkit-text-stroke:0.35px #d1d5db">TIMESTAMP</div>
<div class="t" style="left:891.1px;top:360.0px;font-size:22.5px;letter-spacing:0.192px;color:#d1d5db;-webkit-text-stroke:0.35px #d1d5db">END</div>
<div class="t" style="left:1366.2px;top:360.0px;font-size:22.5px;letter-spacing:0.154px;color:#d1d5db;-webkit-text-stroke:0.35px #d1d5db">SENSOR</div>
<div class="t" style="left:1751.2px;top:360.0px;font-size:22.5px;letter-spacing:0.387px;color:#d1d5db;-webkit-text-stroke:0.35px #d1d5db">ALERT TYPE</div>
<div class="t" style="left:1980.0px;top:360.0px;font-size:22.5px;letter-spacing:-0.023px;color:#d1d5db;-webkit-text-stroke:0.35px #d1d5db">ALERT TRIGGERED</div>
<div class="t" style="left:2283.4px;top:360.0px;font-size:22.5px;letter-spacing:0.432px;color:#d1d5db;-webkit-text-stroke:0.35px #d1d5db">VLM VERDICT</div>
<div class="t" style="left:2529.9px;top:360.0px;font-size:22.5px;letter-spacing:0.342px;color:#d1d5db;-webkit-text-stroke:0.35px #d1d5db">ALERT DESCRIPTION</div>
<div class="t" style="left:414.7px;top:503.0px;font-size:33px;letter-spacing:0.647px;color:#d1d5db;-webkit-text-stroke:0.25px #d1d5db">01/22/2026</div>
<div class="t" style="left:595.5px;top:503.0px;font-size:33px;letter-spacing:-0.296px;color:#d1d5db;-webkit-text-stroke:0.25px #d1d5db">05:22:51</div>
<div class="t" style="left:731.5px;top:503.0px;font-size:33px;letter-spacing:-1.5px;color:#d1d5db;-webkit-text-stroke:0.25px #d1d5db">PM</div>
<div class="t" style="left:892.1px;top:503.0px;font-size:33px;letter-spacing:0.647px;color:#d1d5db;-webkit-text-stroke:0.25px #d1d5db">01/22/2026</div>
<div class="t" style="left:1071.9px;top:503.0px;font-size:33px;letter-spacing:-0.296px;color:#d1d5db;-webkit-text-stroke:0.25px #d1d5db">05:22:51</div>
<div class="t" style="left:1207.9px;top:503.0px;font-size:33px;letter-spacing:-1.5px;color:#d1d5db;-webkit-text-stroke:0.25px #d1d5db">PM</div>
<div class="t" style="left:1368.8px;top:503.0px;font-size:33px;letter-spacing:-0.118px;color:#d1d5db;-webkit-text-stroke:0.25px #d1d5db">warehouse_sample</div>
<div class="t" style="left:1752.2px;top:503.0px;font-size:33px;letter-spacing:0.786px;color:#d1d5db;-webkit-text-stroke:0.25px #d1d5db">vlm-alert</div>
<div class="t" style="left:1979.0px;top:503.0px;font-size:33px;letter-spacing:0.042px;color:#d1d5db;-webkit-text-stroke:0.25px #d1d5db">N/A</div>
<div class="t" style="left:2283.0px;top:503.0px;font-size:33px;letter-spacing:0.492px;color:#d1d5db;-webkit-text-stroke:0.25px #d1d5db">N/A</div>
<div class="t" style="left:2529.2px;top:503.0px;font-size:33px;letter-spacing:0.113px;color:#d1d5db;-webkit-text-stroke:0.25px #d1d5db">RTVI Safety Compliance Detector</div>
<div class="t" style="left:414.7px;top:712.0px;font-size:33px;letter-spacing:0.647px;color:#d1d5db;-webkit-text-stroke:0.25px #d1d5db">01/22/2026</div>
<div class="t" style="left:595.5px;top:712.0px;font-size:33px;letter-spacing:0.733px;color:#d1d5db;-webkit-text-stroke:0.25px #d1d5db">05:22:26</div>
<div class="t" style="left:738.7px;top:712.0px;font-size:33px;letter-spacing:-1.5px;color:#d1d5db;-webkit-text-stroke:0.25px #d1d5db">PM</div>
<div class="t" style="left:892.1px;top:712.0px;font-size:33px;letter-spacing:0.647px;color:#d1d5db;-webkit-text-stroke:0.25px #d1d5db">01/22/2026</div>
<div class="t" style="left:1071.9px;top:712.0px;font-size:33px;letter-spacing:0.733px;color:#d1d5db;-webkit-text-stroke:0.25px #d1d5db">05:22:26</div>
<div class="t" style="left:1216.1px;top:712.0px;font-size:33px;letter-spacing:-1.5px;color:#d1d5db;-webkit-text-stroke:0.25px #d1d5db">PM</div>
<div class="t" style="left:1368.8px;top:712.0px;font-size:33px;letter-spacing:-0.118px;color:#d1d5db;-webkit-text-stroke:0.25px #d1d5db">warehouse_sample</div>
<div class="t" style="left:1752.2px;top:712.0px;font-size:33px;letter-spacing:0.786px;color:#d1d5db;-webkit-text-stroke:0.25px #d1d5db">vlm-alert</div>
<div class="t" style="left:1979.0px;top:712.0px;font-size:33px;letter-spacing:0.042px;color:#d1d5db;-webkit-text-stroke:0.25px #d1d5db">N/A</div>
<div class="t" style="left:2283.0px;top:712.0px;font-size:33px;letter-spacing:0.492px;color:#d1d5db;-webkit-text-stroke:0.25px #d1d5db">N/A</div>
<div class="t" style="left:2529.2px;top:712.0px;font-size:33px;letter-spacing:0.113px;color:#d1d5db;-webkit-text-stroke:0.25px #d1d5db">RTVI Safety Compliance Detector</div>
<div class="t" style="left:414.7px;top:921.0px;font-size:33px;letter-spacing:0.647px;color:#d1d5db;-webkit-text-stroke:0.25px #d1d5db">01/22/2026</div>
<div class="t" style="left:595.5px;top:921.0px;font-size:33px;letter-spacing:-1.138px;color:#d1d5db;-webkit-text-stroke:0.25px #d1d5db">05:19:21</div>
<div class="t" style="left:726.6px;top:921.0px;font-size:33px;letter-spacing:-1.5px;color:#d1d5db;-webkit-text-stroke:0.25px #d1d5db">PM</div>
<div class="t" style="left:892.1px;top:921.0px;font-size:33px;letter-spacing:0.647px;color:#d1d5db;-webkit-text-stroke:0.25px #d1d5db">01/22/2026</div>
<div class="t" style="left:1071.9px;top:921.0px;font-size:33px;letter-spacing:-1.138px;color:#d1d5db;-webkit-text-stroke:0.25px #d1d5db">05:19:21</div>
<div class="t" style="left:1203.0px;top:921.0px;font-size:33px;letter-spacing:-1.5px;color:#d1d5db;-webkit-text-stroke:0.25px #d1d5db">PM</div>
<div class="t" style="left:1368.8px;top:921.0px;font-size:33px;letter-spacing:-0.118px;color:#d1d5db;-webkit-text-stroke:0.25px #d1d5db">warehouse_sample</div>
<div class="t" style="left:1752.2px;top:921.0px;font-size:33px;letter-spacing:0.786px;color:#d1d5db;-webkit-text-stroke:0.25px #d1d5db">vlm-alert</div>
<div class="t" style="left:1979.0px;top:921.0px;font-size:33px;letter-spacing:0.042px;color:#d1d5db;-webkit-text-stroke:0.25px #d1d5db">N/A</div>
<div class="t" style="left:2283.0px;top:921.0px;font-size:33px;letter-spacing:0.492px;color:#d1d5db;-webkit-text-stroke:0.25px #d1d5db">N/A</div>
<div class="t" style="left:2529.2px;top:921.0px;font-size:33px;letter-spacing:0.113px;color:#d1d5db;-webkit-text-stroke:0.25px #d1d5db">RTVI Safety Compliance Detector</div>
<div class="t" style="left:414.7px;top:1130.0px;font-size:33px;letter-spacing:0.647px;color:#d1d5db;-webkit-text-stroke:0.25px #d1d5db">01/22/2026</div>
<div class="t" style="left:595.5px;top:1130.0px;font-size:33px;letter-spacing:-1.095px;color:#d1d5db;-webkit-text-stroke:0.25px #d1d5db">05:19:18</div>
<div class="t" style="left:725.9px;top:1130.0px;font-size:33px;letter-spacing:-1.5px;color:#d1d5db;-webkit-text-stroke:0.25px #d1d5db">PM</div>
<div class="t" style="left:892.1px;top:1130.0px;font-size:33px;letter-spacing:0.647px;color:#d1d5db;-webkit-text-stroke:0.25px #d1d5db">01/22/2026</div>
<div class="t" style="left:1071.9px;top:1130.0px;font-size:33px;letter-spacing:-1.095px;color:#d1d5db;-webkit-text-stroke:0.25px #d1d5db">05:19:18</div>
<div class="t" style="left:1203.3px;top:1130.0px;font-size:33px;letter-spacing:-1.5px;color:#d1d5db;-webkit-text-stroke:0.25px #d1d5db">PM</div>
<div class="t" style="left:1368.8px;top:1130.0px;font-size:33px;letter-spacing:-0.118px;color:#d1d5db;-webkit-text-stroke:0.25px #d1d5db">warehouse_sample</div>
<div class="t" style="left:1752.2px;top:1130.0px;font-size:33px;letter-spacing:0.786px;color:#d1d5db;-webkit-text-stroke:0.25px #d1d5db">vlm-alert</div>
<div class="t" style="left:1979.0px;top:1130.0px;font-size:33px;letter-spacing:0.042px;color:#d1d5db;-webkit-text-stroke:0.25px #d1d5db">N/A</div>
<div class="t" style="left:2283.0px;top:1130.0px;font-size:33px;letter-spacing:0.492px;color:#d1d5db;-webkit-text-stroke:0.25px #d1d5db">N/A</div>
<div class="t" style="left:2529.2px;top:1130.0px;font-size:33px;letter-spacing:0.113px;color:#d1d5db;-webkit-text-stroke:0.25px #d1d5db">RTVI Safety Compliance Detector</div>
<div class="t" style="left:414.7px;top:1339.0px;font-size:33px;letter-spacing:0.647px;color:#d1d5db;-webkit-text-stroke:0.25px #d1d5db">01/22/2026</div>
<div class="t" style="left:595.5px;top:1339.0px;font-size:33px;letter-spacing:-1.081px;color:#d1d5db;-webkit-text-stroke:0.25px #d1d5db">05:19:12</div>
<div class="t" style="left:726.0px;top:1339.0px;font-size:33px;letter-spacing:-1.5px;color:#d1d5db;-webkit-text-stroke:0.25px #d1d5db">PM</div>
<div class="t" style="left:892.1px;top:1339.0px;font-size:33px;letter-spacing:0.647px;color:#d1d5db;-webkit-text-stroke:0.25px #d1d5db">01/22/2026</div>
<div class="t" style="left:1071.9px;top:1339.0px;font-size:33px;letter-spacing:-1.081px;color:#d1d5db;-webkit-text-stroke:0.25px #d1d5db">05:19:12</div>
<div class="t" style="left:1202.4px;top:1339.0px;font-size:33px;letter-spacing:-1.5px;color:#d1d5db;-webkit-text-stroke:0.25px #d1d5db">PM</div>
<div class="t" style="left:1368.8px;top:1339.0px;font-size:33px;letter-spacing:-0.118px;color:#d1d5db;-webkit-text-stroke:0.25px #d1d5db">warehouse_sample</div>
<div class="t" style="left:1752.2px;top:1339.0px;font-size:33px;letter-spacing:0.786px;color:#d1d5db;-webkit-text-stroke:0.25px #d1d5db">vlm-alert</div>
<div class="t" style="left:1979.0px;top:1339.0px;font-size:33px;letter-spacing:0.042px;color:#d1d5db;-webkit-text-stroke:0.25px #d1d5db">N/A</div>
<div class="t" style="left:2283.0px;top:1339.0px;font-size:33px;letter-spacing:0.492px;color:#d1d5db;-webkit-text-stroke:0.25px #d1d5db">N/A</div>
<div class="t" style="left:2529.2px;top:1339.0px;font-size:33px;letter-spacing:0.113px;color:#d1d5db;-webkit-text-stroke:0.25px #d1d5db">RTVI Safety Compliance Detector</div>
<div class="t" style="left:414.7px;top:1548.0px;font-size:33px;letter-spacing:0.647px;color:#d1d5db;-webkit-text-stroke:0.25px #d1d5db">01/22/2026</div>
<div class="t" style="left:595.5px;top:1548.0px;font-size:33px;letter-spacing:-1.024px;color:#d1d5db;-webkit-text-stroke:0.25px #d1d5db">05:19:10</div>
<div class="t" style="left:726.4px;top:1548.0px;font-size:33px;letter-spacing:-1.5px;color:#d1d5db;-webkit-text-stroke:0.25px #d1d5db">PM</div>
<div class="t" style="left:892.1px;top:1548.0px;font-size:33px;letter-spacing:0.647px;color:#d1d5db;-webkit-text-stroke:0.25px #d1d5db">01/22/2026</div>
<div class="t" style="left:1071.9px;top:1548.0px;font-size:33px;letter-spacing:-1.024px;color:#d1d5db;-webkit-text-stroke:0.25px #d1d5db">05:19:10</div>
<div class="t" style="left:1203.8px;top:1548.0px;font-size:33px;letter-spacing:-1.5px;color:#d1d5db;-webkit-text-stroke:0.25px #d1d5db">PM</div>
<div class="t" style="left:1368.8px;top:1548.0px;font-size:33px;letter-spacing:-0.118px;color:#d1d5db;-webkit-text-stroke:0.25px #d1d5db">warehouse_sample</div>
<div class="t" style="left:1752.2px;top:1548.0px;font-size:33px;letter-spacing:0.786px;color:#d1d5db;-webkit-text-stroke:0.25px #d1d5db">vlm-alert</div>
<div class="t" style="left:1979.0px;top:1548.0px;font-size:33px;letter-spacing:0.042px;color:#d1d5db;-webkit-text-stroke:0.25px #d1d5db">N/A</div>
<div class="t" style="left:2283.0px;top:1548.0px;font-size:33px;letter-spacing:0.492px;color:#d1d5db;-webkit-text-stroke:0.25px #d1d5db">N/A</div>
<div class="t" style="left:2529.2px;top:1548.0px;font-size:33px;letter-spacing:0.113px;color:#d1d5db;-webkit-text-stroke:0.25px #d1d5db">RTVI Safety Compliance Detector</div>
<div class="t" style="left:414.7px;top:1757.0px;font-size:33px;letter-spacing:0.647px;color:#d1d5db;-webkit-text-stroke:0.25px #d1d5db">01/22/2026</div>
<div class="t" style="left:595.5px;top:1757.0px;font-size:33px;letter-spacing:-0.282px;color:#d1d5db;-webkit-text-stroke:0.25px #d1d5db">05:18:56</div>
<div class="t" style="left:732.6px;top:1757.0px;font-size:33px;letter-spacing:-1.5px;color:#d1d5db;-webkit-text-stroke:0.25px #d1d5db">PM</div>
<div class="t" style="left:892.1px;top:1757.0px;font-size:33px;letter-spacing:0.647px;color:#d1d5db;-webkit-text-stroke:0.25px #d1d5db">01/22/2026</div>
<div class="t" style="left:1071.9px;top:1757.0px;font-size:33px;letter-spacing:-0.282px;color:#d1d5db;-webkit-text-stroke:0.25px #d1d5db">05:18:56</div>
<div class="t" style="left:1209.0px;top:1757.0px;font-size:33px;letter-spacing:-1.5px;color:#d1d5db;-webkit-text-stroke:0.25px #d1d5db">PM</div>
<div class="t" style="left:1368.8px;top:1757.0px;font-size:33px;letter-spacing:-0.118px;color:#d1d5db;-webkit-text-stroke:0.25px #d1d5db">warehouse_sample</div>
<div class="t" style="left:1752.2px;top:1757.0px;font-size:33px;letter-spacing:0.786px;color:#d1d5db;-webkit-text-stroke:0.25px #d1d5db">vlm-alert</div>
<div class="t" style="left:1979.0px;top:1757.0px;font-size:33px;letter-spacing:0.042px;color:#d1d5db;-webkit-text-stroke:0.25px #d1d5db">N/A</div>
<div class="t" style="left:2283.0px;top:1757.0px;font-size:33px;letter-spacing:0.492px;color:#d1d5db;-webkit-text-stroke:0.25px #d1d5db">N/A</div>
<div class="t" style="left:2529.2px;top:1757.0px;font-size:33px;letter-spacing:0.113px;color:#d1d5db;-webkit-text-stroke:0.25px #d1d5db">RTVI Safety Compliance Detector</div>
<div class="t" style="left:415.9px;top:1966.0px;font-size:33px;letter-spacing:0.425px;color:#d1d5db;-webkit-text-stroke:0.25px #d1d5db">01/22/2026</div>
<div class="t" style="left:596.5px;top:1966.0px;font-size:33px;letter-spacing:-0.667px;color:#d1d5db;-webkit-text-stroke:0.25px #d1d5db">05:18:51</div>
<div class="t" style="left:733.5px;top:1966.0px;font-size:33px;letter-spacing:-5.5px;color:#d1d5db;-webkit-text-stroke:0.25px #d1d5db">PM</div>
<div class="t" style="left:892.7px;top:1966.0px;font-size:33px;letter-spacing:0.425px;color:#d1d5db;-webkit-text-stroke:0.25px #d1d5db">01/22/2026</div>
<div class="t" style="left:1073.3px;top:1966.0px;font-size:33px;letter-spacing:-0.667px;color:#d1d5db;-webkit-text-stroke:0.25px #d1d5db">05:18:51</div>
<div class="t" style="left:1210.3px;top:1966.0px;font-size:33px;letter-spacing:-5.5px;color:#d1d5db;-webkit-text-stroke:0.25px #d1d5db">PM</div>
<div class="t" style="left:1368.6px;top:1966.0px;font-size:33px;letter-spacing:-0.158px;color:#d1d5db;-webkit-text-stroke:0.25px #d1d5db">warehouse_sample</div>
<div class="t" style="left:1752.4px;top:1966.0px;font-size:33px;letter-spacing:0.761px;color:#d1d5db;-webkit-text-stroke:0.25px #d1d5db">vlm-alert</div>
<div class="t" style="left:1981.0px;top:1966.0px;font-size:33px;letter-spacing:-0.658px;color:#d1d5db;-webkit-text-stroke:0.25px #d1d5db">N/A</div>
<div class="t" style="left:2285.0px;top:1966.0px;font-size:33px;letter-spacing:-0.508px;color:#d1d5db;-webkit-text-stroke:0.25px #d1d5db">N/A</div>
<div class="t" style="left:2531.4px;top:1966.0px;font-size:33px;letter-spacing:0.046px;color:#d1d5db;-webkit-text-stroke:0.25px #d1d5db">RTVI Safety Compliance Detector</div>
<div class="t" style="left:393.4px;top:257.0px;font-size:23px;letter-spacing:0px;color:#fff;font-weight:700">8</div>
</body></html>
